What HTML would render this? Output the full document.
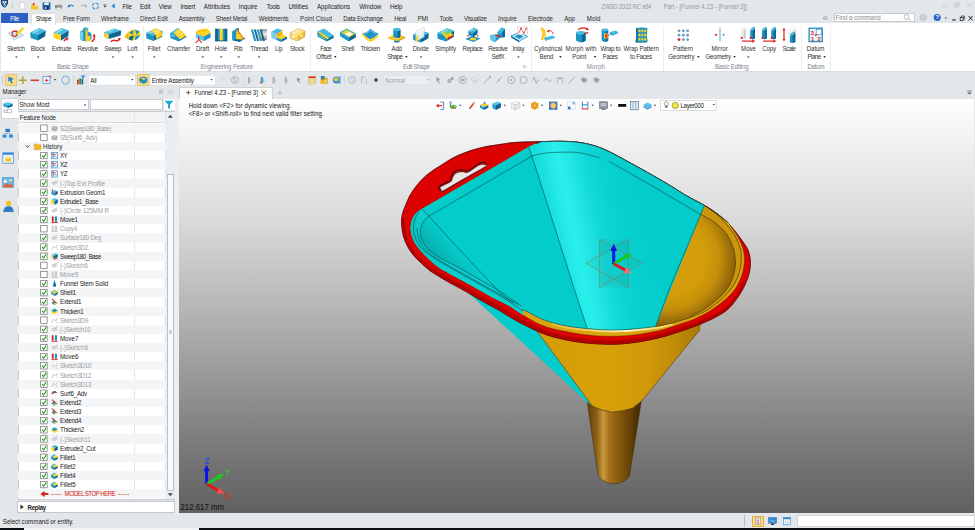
<!DOCTYPE html>
<html><head><meta charset="utf-8"><title>ZW3D 2022 RC x64 - Part - [Funnel 4.Z3 - [Funnel 3]]</title>
<style>
html,body{margin:0;padding:0;}
body{width:975px;height:530px;overflow:hidden;background:#e4e7ea;position:relative;font-family:"Liberation Sans",sans-serif;}
.t{position:absolute;white-space:nowrap;line-height:1;display:block;transform-origin:0 84.65%;}
.b{position:absolute;box-sizing:border-box;}
svg{position:absolute;overflow:visible;}
</style></head>
<body>
<span class="t " style="left:122.40px;top:4.08px;font-size:6.164px;color:#1a1a1a;letter-spacing:-0.158px;transform:scaleY(1.087);">File</span>
<span class="t " style="left:140.10px;top:4.08px;font-size:6.164px;color:#1a1a1a;letter-spacing:-0.080px;transform:scaleY(1.087);">Edit</span>
<span class="t " style="left:158.80px;top:4.08px;font-size:6.164px;color:#1a1a1a;letter-spacing:-0.112px;transform:scaleY(1.087);">View</span>
<span class="t " style="left:180.40px;top:4.08px;font-size:6.164px;color:#1a1a1a;letter-spacing:-0.103px;transform:scaleY(1.087);">Insert</span>
<span class="t " style="left:203.80px;top:4.08px;font-size:6.164px;color:#1a1a1a;letter-spacing:0.026px;transform:scaleY(1.087);">Attributes</span>
<span class="t " style="left:238.80px;top:4.08px;font-size:6.164px;color:#1a1a1a;letter-spacing:-0.035px;transform:scaleY(1.087);">Inquire</span>
<span class="t " style="left:266.50px;top:4.08px;font-size:6.164px;color:#1a1a1a;letter-spacing:-0.238px;transform:scaleY(1.087);">Tools</span>
<span class="t " style="left:288.50px;top:4.08px;font-size:6.164px;color:#1a1a1a;letter-spacing:-0.029px;transform:scaleY(1.087);">Utilities</span>
<span class="t " style="left:317.00px;top:4.08px;font-size:6.164px;color:#1a1a1a;letter-spacing:-0.003px;transform:scaleY(1.087);">Applications</span>
<span class="t " style="left:359.20px;top:4.08px;font-size:6.164px;color:#1a1a1a;letter-spacing:0.046px;transform:scaleY(1.087);">Window</span>
<span class="t " style="left:390.10px;top:4.08px;font-size:6.164px;color:#1a1a1a;letter-spacing:-0.144px;transform:scaleY(1.087);">Help</span>
<span class="t " style="left:601.20px;top:4.08px;font-size:6.164px;color:#9a9a9a;letter-spacing:-0.322px;transform:scaleY(1.087);">ZW3D 2022 RC x64</span>
<span class="t " style="left:663.40px;top:4.08px;font-size:6.164px;color:#9a9a9a;letter-spacing:-0.079px;transform:scaleY(1.087);">Part - [Funnel 4.Z3 - [Funnel 3]]</span>
<div class="b " style="left:1px;top:13.3px;width:27px;height:10.2px;background:#2b5fc4;"></div>
<span class="t " style="left:10.30px;top:15.98px;font-size:6.164px;color:#ffffff;letter-spacing:-0.383px;transform:scaleY(1.087);">File</span>
<span class="t " style="left:63.10px;top:15.98px;font-size:6.164px;color:#2a2a2a;letter-spacing:-0.241px;transform:scaleY(1.087);">Free Form</span>
<span class="t " style="left:101.00px;top:15.98px;font-size:6.164px;color:#2a2a2a;letter-spacing:-0.069px;transform:scaleY(1.087);">Wireframe</span>
<span class="t " style="left:140.10px;top:15.98px;font-size:6.164px;color:#2a2a2a;letter-spacing:-0.085px;transform:scaleY(1.087);">Direct Edit</span>
<span class="t " style="left:178.80px;top:15.98px;font-size:6.164px;color:#2a2a2a;letter-spacing:-0.127px;transform:scaleY(1.087);">Assembly</span>
<span class="t " style="left:215.80px;top:15.98px;font-size:6.164px;color:#2a2a2a;letter-spacing:-0.127px;transform:scaleY(1.087);">Sheet Metal</span>
<span class="t " style="left:258.80px;top:15.98px;font-size:6.164px;color:#2a2a2a;letter-spacing:-0.113px;transform:scaleY(1.087);">Weldments</span>
<span class="t " style="left:300.10px;top:15.98px;font-size:6.164px;color:#2a2a2a;letter-spacing:-0.006px;transform:scaleY(1.087);">Point Cloud</span>
<span class="t " style="left:343.20px;top:15.98px;font-size:6.164px;color:#2a2a2a;letter-spacing:-0.204px;transform:scaleY(1.087);">Data Exchange</span>
<span class="t " style="left:394.20px;top:15.98px;font-size:6.164px;color:#2a2a2a;letter-spacing:-0.194px;transform:scaleY(1.087);">Heal</span>
<span class="t " style="left:417.60px;top:15.98px;font-size:6.164px;color:#2a2a2a;letter-spacing:-0.153px;transform:scaleY(1.087);">PMI</span>
<span class="t " style="left:439.60px;top:15.98px;font-size:6.164px;color:#2a2a2a;letter-spacing:-0.258px;transform:scaleY(1.087);">Tools</span>
<span class="t " style="left:463.90px;top:15.98px;font-size:6.164px;color:#2a2a2a;letter-spacing:-0.184px;transform:scaleY(1.087);">Visualize</span>
<span class="t " style="left:498.10px;top:15.98px;font-size:6.164px;color:#2a2a2a;letter-spacing:-0.021px;transform:scaleY(1.087);">Inquire</span>
<span class="t " style="left:528.10px;top:15.98px;font-size:6.164px;color:#2a2a2a;letter-spacing:-0.160px;transform:scaleY(1.087);">Electrode</span>
<span class="t " style="left:564.20px;top:15.98px;font-size:6.164px;color:#2a2a2a;letter-spacing:-0.056px;transform:scaleY(1.087);">App</span>
<span class="t " style="left:586.80px;top:15.98px;font-size:6.164px;color:#2a2a2a;letter-spacing:0.135px;transform:scaleY(1.087);">Mold</span>
<div class="b " style="left:833.6px;top:12.5px;width:81px;height:9.7px;background:#ffffff;border:0.5px solid #c8ccd0;"></div>
<span class="t " style="left:835.60px;top:14.98px;font-size:6.164px;color:#8a8a8a;letter-spacing:-0.058px;transform:scaleY(1.087);">Find a command</span>
<div class="b " style="left:0.5px;top:23.4px;width:974.5px;height:48.6px;background:#ffffff;border-bottom:1px solid #d9dde1;"></div>
<div class="b " style="left:31px;top:12.9px;width:25.2px;height:12px;background:#ffffff;border:0.5px solid #dde1e5;border-bottom:none;"></div>
<div class="b " style="left:143px;top:26px;width:1px;height:45px;background:#eceef0;"></div>
<div class="b " style="left:310px;top:26px;width:1px;height:45px;background:#eceef0;"></div>
<div class="b " style="left:531px;top:26px;width:1px;height:45px;background:#eceef0;"></div>
<div class="b " style="left:663px;top:26px;width:1px;height:45px;background:#eceef0;"></div>
<div class="b " style="left:801px;top:26px;width:1px;height:45px;background:#eceef0;"></div>
<div class="b " style="left:830px;top:26px;width:1px;height:45px;background:#eceef0;"></div>
<span class="t " style="left:35.70px;top:15.98px;font-size:6.164px;color:#2a2a2a;letter-spacing:-0.425px;transform:scaleY(1.087);">Shape</span>
<span class="t " style="left:6.90px;top:45.98px;font-size:6.164px;color:#333;letter-spacing:-0.141px;transform:scaleY(1.087);">Sketch</span>
<span class="t " style="left:30.80px;top:45.98px;font-size:6.164px;color:#333;letter-spacing:-0.155px;transform:scaleY(1.087);">Block</span>
<span class="t " style="left:51.70px;top:45.98px;font-size:6.164px;color:#333;letter-spacing:-0.221px;transform:scaleY(1.087);">Extrude</span>
<span class="t " style="left:77.50px;top:45.98px;font-size:6.164px;color:#333;letter-spacing:-0.253px;transform:scaleY(1.087);">Revolve</span>
<span class="t " style="left:104.20px;top:45.98px;font-size:6.164px;color:#333;letter-spacing:-0.390px;transform:scaleY(1.087);">Sweep</span>
<span class="t " style="left:127.20px;top:45.98px;font-size:6.164px;color:#333;letter-spacing:0.005px;transform:scaleY(1.087);">Loft</span>
<span class="t " style="left:147.80px;top:45.98px;font-size:6.164px;color:#333;letter-spacing:-0.086px;transform:scaleY(1.087);">Fillet</span>
<span class="t " style="left:167.10px;top:45.98px;font-size:6.164px;color:#333;letter-spacing:-0.077px;transform:scaleY(1.087);">Chamfer</span>
<span class="t " style="left:195.90px;top:45.98px;font-size:6.164px;color:#333;letter-spacing:-0.012px;transform:scaleY(1.087);">Draft</span>
<span class="t " style="left:214.80px;top:45.98px;font-size:6.164px;color:#333;letter-spacing:-0.094px;transform:scaleY(1.087);">Hole</span>
<span class="t " style="left:234.10px;top:45.98px;font-size:6.164px;color:#333;letter-spacing:-0.283px;transform:scaleY(1.087);">Rib</span>
<span class="t " style="left:250.20px;top:45.98px;font-size:6.164px;color:#333;letter-spacing:-0.305px;transform:scaleY(1.087);">Thread</span>
<span class="t " style="left:275.10px;top:45.98px;font-size:6.164px;color:#333;letter-spacing:-0.275px;transform:scaleY(1.087);">Lip</span>
<span class="t " style="left:289.90px;top:45.98px;font-size:6.164px;color:#333;letter-spacing:-0.203px;transform:scaleY(1.087);">Stock</span>
<span class="t " style="left:341.60px;top:45.98px;font-size:6.164px;color:#333;letter-spacing:-0.241px;transform:scaleY(1.087);">Shell</span>
<span class="t " style="left:360.40px;top:45.98px;font-size:6.164px;color:#333;letter-spacing:-0.283px;transform:scaleY(1.087);">Thicken</span>
<span class="t " style="left:412.80px;top:45.98px;font-size:6.164px;color:#333;letter-spacing:-0.172px;transform:scaleY(1.087);">Divide</span>
<span class="t " style="left:435.20px;top:45.98px;font-size:6.164px;color:#333;letter-spacing:-0.097px;transform:scaleY(1.087);">Simplify</span>
<span class="t " style="left:462.60px;top:45.98px;font-size:6.164px;color:#333;letter-spacing:-0.374px;transform:scaleY(1.087);">Replace</span>
<span class="t " style="left:512.60px;top:45.98px;font-size:6.164px;color:#333;letter-spacing:-0.244px;transform:scaleY(1.087);">Inlay</span>
<span class="t " style="left:741.10px;top:45.98px;font-size:6.164px;color:#333;letter-spacing:-0.043px;transform:scaleY(1.087);">Move</span>
<span class="t " style="left:762.30px;top:45.98px;font-size:6.164px;color:#333;letter-spacing:-0.173px;transform:scaleY(1.087);">Copy</span>
<span class="t " style="left:782.40px;top:45.98px;font-size:6.164px;color:#333;letter-spacing:-0.444px;transform:scaleY(1.087);">Scale</span>
<span class="t " style="left:320.30px;top:45.98px;font-size:6.164px;color:#333;letter-spacing:-0.751px;transform:scaleY(1.087);">Face</span>
<span class="t " style="left:316.30px;top:53.68px;font-size:6.164px;color:#333;letter-spacing:-0.205px;transform:scaleY(1.087);">Offset</span>
<span class="t " style="left:391.60px;top:45.98px;font-size:6.164px;color:#333;letter-spacing:-0.289px;transform:scaleY(1.087);">Add</span>
<span class="t " style="left:387.60px;top:53.68px;font-size:6.164px;color:#333;letter-spacing:-0.645px;transform:scaleY(1.087);">Shape</span>
<span class="t " style="left:488.30px;top:45.98px;font-size:6.164px;color:#333;letter-spacing:-0.453px;transform:scaleY(1.087);">Resolve</span>
<span class="t " style="left:491.40px;top:53.68px;font-size:6.164px;color:#333;letter-spacing:-0.367px;transform:scaleY(1.087);">SelfX</span>
<span class="t " style="left:534.00px;top:45.98px;font-size:6.164px;color:#333;letter-spacing:-0.012px;transform:scaleY(1.087);">Cylindrical</span>
<span class="t " style="left:539.60px;top:53.68px;font-size:6.164px;color:#333;letter-spacing:-0.174px;transform:scaleY(1.087);">Bend</span>
<span class="t " style="left:565.60px;top:45.98px;font-size:6.164px;color:#333;letter-spacing:0.075px;transform:scaleY(1.087);">Morph with</span>
<span class="t " style="left:572.20px;top:53.68px;font-size:6.164px;color:#333;letter-spacing:0.010px;transform:scaleY(1.087);">Point</span>
<span class="t " style="left:600.50px;top:45.98px;font-size:6.164px;color:#333;letter-spacing:-0.210px;transform:scaleY(1.087);">Wrap to</span>
<span class="t " style="left:602.80px;top:53.68px;font-size:6.164px;color:#333;letter-spacing:-0.417px;transform:scaleY(1.087);">Faces</span>
<span class="t " style="left:623.60px;top:45.98px;font-size:6.164px;color:#333;letter-spacing:-0.084px;transform:scaleY(1.087);">Wrap Pattern</span>
<span class="t " style="left:630.00px;top:53.68px;font-size:6.164px;color:#333;letter-spacing:-0.217px;transform:scaleY(1.087);">to Faces</span>
<span class="t " style="left:672.90px;top:45.98px;font-size:6.164px;color:#333;letter-spacing:0.032px;transform:scaleY(1.087);">Pattern</span>
<span class="t " style="left:668.20px;top:53.68px;font-size:6.164px;color:#333;letter-spacing:-0.108px;transform:scaleY(1.087);">Geometry</span>
<span class="t " style="left:711.40px;top:45.98px;font-size:6.164px;color:#333;letter-spacing:0.068px;transform:scaleY(1.087);">Mirror</span>
<span class="t " style="left:705.50px;top:53.68px;font-size:6.164px;color:#333;letter-spacing:-0.195px;transform:scaleY(1.087);">Geometry</span>
<span class="t " style="left:806.70px;top:45.98px;font-size:6.164px;color:#333;letter-spacing:-0.091px;transform:scaleY(1.087);">Datum</span>
<span class="t " style="left:807.40px;top:53.68px;font-size:6.164px;color:#333;letter-spacing:-0.473px;transform:scaleY(1.087);">Plane</span>
<span class="t " style="left:56.90px;top:63.78px;font-size:6.164px;color:#7e868e;letter-spacing:-0.265px;transform:scaleY(1.087);">Basic Shape</span>
<span class="t " style="left:200.40px;top:63.78px;font-size:6.164px;color:#7e868e;letter-spacing:-0.171px;transform:scaleY(1.087);">Engineering Feature</span>
<span class="t " style="left:402.90px;top:63.78px;font-size:6.164px;color:#7e868e;letter-spacing:-0.346px;transform:scaleY(1.087);">Edit Shape</span>
<span class="t " style="left:586.80px;top:63.78px;font-size:6.164px;color:#7e868e;letter-spacing:0.185px;transform:scaleY(1.087);">Morph</span>
<span class="t " style="left:714.90px;top:63.78px;font-size:6.164px;color:#7e868e;letter-spacing:-0.149px;transform:scaleY(1.087);">Basic Editing</span>
<span class="t " style="left:807.40px;top:63.78px;font-size:6.164px;color:#7e868e;letter-spacing:-0.231px;transform:scaleY(1.087);">Datum</span>
<svg width="975" height="100" viewBox="0 0 975 100" style="left:0;top:0">
<polygon points="15.1,56.4 17.7,56.4 16.4,58.1" fill="#333"/>
<polygon points="36.9,56.4 39.5,56.4 38.2,58.1" fill="#333"/>
<polygon points="111.6,56.4 114.2,56.4 112.9,58.1" fill="#333"/>
<polygon points="131.3,56.4 133.9,56.4 132.6,58.1" fill="#333"/>
<polygon points="152.9,56.4 155.5,56.4 154.2,58.1" fill="#333"/>
<polygon points="201.5,56.4 204.1,56.4 202.8,58.1" fill="#333"/>
<polygon points="219.9,56.4 222.5,56.4 221.2,58.1" fill="#333"/>
<polygon points="237.5,56.4 240.1,56.4 238.8,58.1" fill="#333"/>
<polygon points="257.8,56.4 260.4,56.4 259.1,58.1" fill="#333"/>
<polygon points="419.7,56.4 422.3,56.4 421.0,58.1" fill="#333"/>
<polygon points="517.2,56.4 519.8,56.4 518.5,58.1" fill="#333"/>
<polygon points="747.0,56.4 749.6,56.4 748.3,58.1" fill="#333"/>
<polygon points="333.9,56.1 336.5,56.1 335.2,57.9" fill="#333"/>
<polygon points="405.1,56.1 407.7,56.1 406.4,57.9" fill="#333"/>
<polygon points="559.1,56.1 561.7,56.1 560.4,57.9" fill="#333"/>
<polygon points="593.7,56.1 596.3,56.1 595.0,57.9" fill="#333"/>
<polygon points="697.1,56.1 699.7,56.1 698.4,57.9" fill="#333"/>
<polygon points="733.2,56.1 735.8,56.1 734.5,57.9" fill="#333"/>
<polygon points="823.3,56.1 825.9,56.1 824.6,57.9" fill="#333"/>
<path d="M523.6,64.8 L523.6,67.4 L526.2,67.4 M524.8,65.2 L526.2,66.6" stroke="#8a8a8a" stroke-width="0.5" fill="none"/>
<polygon points="8.2,33.0 17.2,30.0 23.7,35.5 14.2,40.0" fill="#cfe6f6" stroke="#8fb4d6" stroke-width="0.5"/><circle cx="14.7" cy="33.8" r="2.7" fill="none" stroke="#e0201c" stroke-width="1.1"/><path d="M16.5,34.8 L22.7,28.6" stroke="#ffd21e" stroke-width="2.4" stroke-linecap="round"/><path d="M15.799999999999999,35.6 L17.2,34.2" stroke="#555" stroke-width="1.2"/>
<polygon points="30.2,32.5 38.9,28.0 45.7,30.5 38.0,34.9" fill="#42bce0"/><polygon points="30.2,32.5 38.0,34.9 38.0,40.5 30.7,38.0" fill="#1c94c6"/><polygon points="38.0,34.9 45.7,30.5 45.2,36.2 38.0,40.5" fill="#0d6796"/><polygon points="32.5,32.2 38.1,28.9 40.4,29.5 34.9,32.9" fill="#ffffff" fill-opacity="0.45"/>
<polygon points="53.3,32.5 62.0,28.0 68.8,30.5 61.0,34.9" fill="#42bce0"/><polygon points="53.3,32.5 61.0,34.9 61.0,40.5 53.8,38.0" fill="#ffd21e"/><polygon points="61.0,34.9 68.8,30.5 68.3,36.2 61.0,40.5" fill="#0d6796"/><polygon points="55.6,32.2 61.2,28.9 63.5,29.5 57.9,32.9" fill="#ffffff" fill-opacity="0.45"/><path d="M63.8,40.8 L66.3,39.2" stroke="#e0201c" stroke-width="1.4" fill="none"/><polygon points="68.8,37.6 67.2,40.7 65.3,37.7" fill="#e0201c"/>
<path d="M80.1,33 Q80.1,30.5 83.1,30.2 L83.1,28.5 Q85.6,26.4 88.19999999999999,28.5 L88.19999999999999,32 Q91.19999999999999,32 91.39999999999999,34.5 L91.39999999999999,39.5 Q85.6,43 80.1,39.5Z" fill="#1c94c6"/><path d="M83.1,30.2 Q85.6,28.2 88.19999999999999,30.2 L88.19999999999999,28.5 Q85.6,26.4 83.1,28.5Z" fill="#42bce0"/><path d="M80.1,33 Q81.6,31.2 83.1,31.4 L83.1,40.8 Q81.19999999999999,40.4 80.1,39.5Z" fill="#7ad0ee"/><polygon points="85.6,30.0 87.6,30.0 87.6,36.0 90.2,36.0 90.2,41.0 85.6,41.0" fill="#ffd21e" stroke="#f0b010" stroke-width="0.4"/><path d="M91.6,41.6 Q95.0,39.6 94.19999999999999,35.6" stroke="#e0201c" stroke-width="1.4" fill="none"/><polygon points="94.0,33.6 95.8,36.6 92.6,36.4" fill="#e0201c"/>
<polygon points="104.2,32.3 113.7,28.5 121.2,30.6 108.6,34.3" fill="#42bce0"/><polygon points="104.2,32.3 108.6,34.3 108.6,39.0 104.7,36.9" fill="#1c94c6"/><polygon points="108.6,34.3 121.2,30.6 120.7,35.4 108.6,39.0" fill="#0d6796"/><polygon points="106.8,32.1 112.9,29.2 115.4,29.8 109.3,32.6" fill="#ffffff" fill-opacity="0.45"/><polygon points="104.5,32.6 108.6,34.3 108.6,39.0 104.8,37.2" fill="#ffd21e"/><path d="M110.7,41.6 Q113.2,39.6 115.7,40.6 T119.2,39.3" stroke="#e0201c" stroke-width="1.5" fill="none"/><polygon points="121.2,38.4 118.8,41.0 118.0,37.8" fill="#e0201c"/>
<path d="M124.6,36.5 Q127.6,30 134.6,29.2 Q140.1,30 140.6,34.5 Q138.6,39.5 131.6,40.8 Q127.1,40 124.6,36.5Z" fill="#ffd21e"/><polygon points="129.1,32.5 133.6,30.0 132.6,35.0" fill="#1c94c6"/><polygon points="135.1,29.8 139.6,31.2 136.6,35.0" fill="#1c94c6"/><polygon points="129.6,36.5 134.1,35.6 132.2,40.5 128.6,39.6" fill="#0d6796"/><polygon points="135.6,36.0 140.2,35.2 137.6,39.0 134.6,40.0" fill="#1c94c6"/><polygon points="124.6,36.5 128.2,33.6 128.2,39.2" fill="#f0b010"/>
<polygon points="146.0,33.0 155.2,28.5 162.5,31.0 153.4,35.4" fill="#42bce0"/><polygon points="146.0,33.0 153.4,35.4 153.4,41.0 146.5,38.5" fill="#1c94c6"/><polygon points="153.4,35.4 162.5,31.0 162.0,36.8 153.4,41.0" fill="#0d6796"/><polygon points="148.5,32.8 154.4,29.4 156.9,30.0 150.9,33.4" fill="#ffffff" fill-opacity="0.45"/><path d="M150.5,31.2 L156,28.2 Q162.6,30 162.2,35.6 L156.4,39 Q156.4,33.4 150.5,31.2Z" fill="#ffd21e"/><path d="M152.5,31.6 L157,29.2 Q160,30 161,32 L156.6,34.6 Q155,32.4 152.5,31.6Z" fill="#fff" fill-opacity="0.35"/>
<polygon points="170.0,33.2 177.9,27.7 179.2,28.6 173.7,32.8" fill="#42bce0"/><polygon points="170.0,33.2 173.7,32.8 180.2,39.2 178.8,41.5 170.5,37.9" fill="#1c94c6"/><polygon points="170.8,34.0 173.4,33.8 176.2,36.6 171.2,37.0" fill="#7ad0ee" fill-opacity="0.6"/><polygon points="180.2,39.2 186.2,35.5 186.2,37.0 178.8,41.5" fill="#0d6796"/><polygon points="173.7,32.8 179.2,28.6 186.2,35.5 180.2,39.2" fill="#ffd21e"/><polygon points="176.2,32.4 179.2,30.0 183.2,34.0 180.2,36.0" fill="#fff" fill-opacity="0.25"/>
<path d="M195.8,33.5 L195.8,38 L203.8,41 L210.4,37.4 L210.4,33Z" fill="#5cc6ea"/><path d="M203.8,36.5 L210.4,33 L210.4,37.4 L203.8,41Z" fill="#1c94c6"/><path d="M195.8,33.5 Q195.8,30.4 199.4,29.6 L205.8,28.4 Q209.8,29 210.4,33 L203.8,36.5Z" fill="#ffd21e"/><path d="M196.8,32 L206.8,30.2" stroke="#f0b010" stroke-width="0.9"/><path d="M198.8,36.5 L198.8,39.5 M198.8,39.5 L195.8,42.8 M198.8,39.5 L201.8,42.8" stroke="#e0201c" stroke-width="1.1" fill="none"/>
<rect x="215.2" y="28.8" width="12" height="12.4" fill="#1c94c6"/><rect x="215.2" y="28.8" width="2.6" height="12.4" fill="#0d6796"/><rect x="224.6" y="28.8" width="2.6" height="12.4" fill="#0d6796"/><rect x="219.6" y="28.8" width="3.2" height="12.4" fill="#ffd21e"/><rect x="215.2" y="40" width="12" height="1.2" fill="#0a5680" fill-opacity="0.6"/>
<polygon points="232.1,31.5 237.6,27.8 237.6,37.4 232.1,40.2" fill="#1c94c6"/><polygon points="232.1,40.2 237.6,37.4 246.0,38.0 239.6,42.0" fill="#0d6796"/><polygon points="237.6,27.8 239.0,28.6 239.0,37.6 237.6,37.4" fill="#0a5680"/><polygon points="236.2,30.4 243.2,39.6 236.2,39.2" fill="#ffd21e"/><polygon points="236.2,30.4 238.0,29.6 244.2,38.6 243.2,39.6" fill="#e8901a"/>
<defs><linearGradient id="gThr" x1="0" x2="0" y1="0" y2="1"><stop offset="0" stop-color="#8a8a8a"/><stop offset="0.45" stop-color="#f2f2f2"/><stop offset="1" stop-color="#7a7a7a"/></linearGradient></defs><rect x="259.8" y="29.2" width="7" height="11" fill="url(#gThr)"/><polygon points="251.0,29.4 253.0,29.4 256.2,41.0 254.2,41.0" fill="#1c94c6"/><polygon points="253.9,29.4 255.9,29.4 259.1,41.0 257.1,41.0" fill="#0d6796"/><polygon points="256.8,29.4 258.8,29.4 262.0,41.0 260.0,41.0" fill="#1c94c6"/><polygon points="259.7,29.4 261.7,29.4 264.9,41.0 262.9,41.0" fill="#0d6796"/><circle cx="260.6" cy="35.6" r="1" fill="#f0b010"/>
<polygon points="271.0,32.0 277.5,28.6 282.5,30.2 276.4,34.0" fill="#42bce0"/><polygon points="271.0,32.0 276.4,34.0 276.4,40.0 271.4,38.0" fill="#7ad0ee"/><polygon points="276.4,34.0 282.5,30.2 282.5,34.6 276.6,37.8" fill="#f0b010"/><polygon points="276.6,37.8 282.5,34.6 287.0,36.4 281.4,39.6" fill="#ffd21e"/><polygon points="276.4,37.6 281.4,39.6 281.4,42.0 276.4,40.0" fill="#1c94c6"/><polygon points="281.4,39.6 287.0,36.4 287.0,38.8 281.4,42.0" fill="#0d6796"/>
<polygon points="289.8,33.0 298.5,28.5 305.3,31.0 297.6,35.4" fill="#fbe28a"/><polygon points="289.8,33.0 297.6,35.4 297.6,41.0 290.3,38.5" fill="#f7d060"/><polygon points="297.6,35.4 305.3,31.0 304.8,36.8 297.6,41.0" fill="#eeb830"/><polygon points="292.1,32.8 297.7,29.4 300.0,30.0 294.4,33.4" fill="#ffffff" fill-opacity="0.45"/><polygon points="289.8,33.0 298.5,28.5 305.3,31.0 304.8,36.8 297.5,41.0 290.3,38.5" fill="none" stroke="#c89a6a" stroke-width="0.5"/><circle cx="293.8" cy="36.6" r="1.6" fill="#fff6c0"/><circle cx="301.3" cy="35.6" r="1.4" fill="#fff0a0"/>
<polygon points="317.2,31.6 324.2,28.4 333.8,35.4 326.6,38.6" fill="#42bce0"/><polygon points="317.2,31.6 326.6,38.6 326.6,41.6 317.6,36.4" fill="#1c94c6"/><polygon points="326.6,38.6 333.8,35.4 333.6,38.0 326.6,41.6" fill="#0d6796"/><polygon points="318.2,32.6 319.8,31.8 329.2,38.2 327.2,39.2" fill="#ffd21e"/><polygon points="319.2,34.6 324.6,38.4 324.6,39.4 319.2,36.0" fill="#8fcf6a"/>
<polygon points="339.8,32.0 346.8,28.6 355.8,33.6 348.8,37.6" fill="#ffd21e"/><polygon points="344.8,34.0 349.4,32.0 352.4,34.0 348.2,36.4" fill="#fff"/><polygon points="339.8,32.0 346.8,28.6 347.4,29.8 341.8,32.6 348.8,36.4 348.8,37.6" fill="#42bce0"/><polygon points="346.8,28.6 355.8,33.6 354.4,34.0 347.2,30.0" fill="#42bce0"/><polygon points="339.8,32.0 348.8,37.6 348.8,41.4 340.2,36.2" fill="#1c94c6"/><polygon points="348.8,37.6 355.8,33.6 355.8,37.4 348.8,41.4" fill="#0d6796"/>
<path d="M362.2,33 Q367.2,33.5 370.2,28.6 Q374.2,32.4 378.59999999999997,33.6 Q375.2,38 369.8,39.6 Q365.2,36.6 362.2,33Z" fill="#1c94c6"/><path d="M364.2,33.4 Q368.2,33.4 370.4,30 Q373.2,32.6 376.2,33.6" fill="none" stroke="#8fdcf4" stroke-width="0.8"/><path d="M362.2,33 Q365.2,36.6 369.8,39.6 Q375.2,38 378.59999999999997,33.6 L378.4,36 Q375.2,40.4 369.8,42 Q365.2,39.4 362.4,35.4Z" fill="#ffd21e"/>
<polygon points="388.2,37.0 395.2,34.0 405.2,36.4 398.2,39.8" fill="#ffd21e"/><polygon points="388.2,37.0 398.2,39.8 398.2,41.4 388.2,38.6" fill="#f0b010"/><polygon points="398.2,39.8 405.2,36.4 405.2,38.0 398.2,41.4" fill="#e09a10"/><path d="M393.2,29.4 L393.2,37 Q396.8,39 400.4,37 L400.4,29.4Z" fill="#1c94c6"/><path d="M397.59999999999997,30 L400.4,29.4 L400.4,37 Q399.2,37.8 397.59999999999997,38Z" fill="#0d6796"/><ellipse cx="396.8" cy="29.4" rx="3.6" ry="1.6" fill="#42bce0"/><path d="M393.8,40.4 L393.8,42 Q396.8,43.6 399.8,42 L399.8,41Z" fill="#1c94c6"/>
<polygon points="412.8,34.8 421.8,30.5 428.8,32.9 420.8,37.1" fill="#42bce0"/><polygon points="412.8,34.8 420.8,37.1 420.8,42.5 413.3,40.1" fill="#1c94c6"/><polygon points="420.8,37.1 428.8,32.9 428.3,38.4 420.8,42.5" fill="#0d6796"/><polygon points="415.2,34.6 421.0,31.3 423.4,31.9 417.6,35.2" fill="#ffffff" fill-opacity="0.45"/><polygon points="415.8,31.6 424.2,27.6 424.2,37.0 415.8,41.6" fill="#ffffff" fill-opacity="0.8" stroke="#9ab" stroke-width="0.4"/><polygon points="415.8,35.6 417.8,36.2 417.8,41.0 415.8,41.6" fill="#ffd21e"/>
<polygon points="437.2,32.9 446.7,28.0 454.2,30.7 445.7,35.4" fill="#42bce0"/><polygon points="437.2,32.9 445.7,35.4 445.7,41.5 437.7,38.8" fill="#1c94c6"/><polygon points="445.7,35.4 454.2,30.7 453.7,36.9 445.7,41.5" fill="#0d6796"/><polygon points="439.8,32.6 445.9,28.9 448.4,29.6 442.3,33.3" fill="#ffffff" fill-opacity="0.45"/><polygon points="442.2,33.4 448.2,30.4 453.2,35.0 447.2,39.4" fill="#ffd21e"/><polygon points="444.2,32.6 448.2,30.8 450.8,33.0 446.8,35.0" fill="#7ccf5a"/><polygon points="447.6,37.6 452.8,35.2 452.8,37.0 447.6,39.6" fill="#e0201c"/>
<polygon points="465.2,39.0 472.2,36.0 480.6,38.4 473.2,42.0" fill="#1c94c6"/><ellipse cx="473.0" cy="39" rx="3.2" ry="1.3" fill="#ffd21e"/><polygon points="467.8,34.6 466.8,36.6 468.8,36.2" fill="#e0201c"/><polygon points="477.8,34.6 478.8,36.6 476.8,36.2" fill="#e0201c"/><polygon points="468.2,31.1 473.6,27.6 477.8,29.5 473.0,32.9" fill="#42bce0"/><polygon points="468.2,31.1 473.0,32.9 473.0,37.2 468.5,35.3" fill="#1c94c6"/><polygon points="473.0,32.9 477.8,29.5 477.5,33.9 473.0,37.2" fill="#0d6796"/><polygon points="469.6,30.9 473.1,28.3 474.5,28.8 471.1,31.3" fill="#ffffff" fill-opacity="0.45"/>
<polygon points="497.0,32.6 501.6,27.6 505.0,29.0 505.0,37.0 500.0,38.0" fill="#1c94c6"/><polygon points="501.6,27.6 505.0,29.0 501.0,33.4 497.0,32.6" fill="#42bce0"/><polygon points="502.6,32.0 505.0,29.0 505.0,37.0 502.6,37.6" fill="#0d6796"/><polygon points="490.0,35.0 497.6,34.0 494.4,42.4 490.4,40.0" fill="#5cc6ea"/><polygon points="497.6,34.0 500.0,38.0 494.4,42.4" fill="#1c94c6"/><polygon points="495.4,34.4 500.6,35.8 500.0,37.2 495.0,35.8" fill="#e0201c"/>
<polygon points="511.0,36.0 519.0,32.4 527.6,36.6 519.4,41.0" fill="#cfe8f8" stroke="#1c94c6" stroke-width="0.8"/><polygon points="514.6,36.2 519.0,34.2 523.6,36.6 519.4,39.0" fill="#1c94c6"/><polygon points="511.0,36.0 519.4,41.0 519.4,42.6 511.0,37.4" fill="#0d6796"/><rect x="517.6" y="27" width="9.6" height="7.4" fill="#fff" stroke="#aaa" stroke-width="0.4"/><path d="M518.6,33 L521,28.4 L523.8,33 L526.2,28.6" fill="none" stroke="#e0201c" stroke-width="0.7"/><circle cx="521" cy="28.4" r="0.8" fill="#e0201c"/><circle cx="523.8" cy="33" r="0.8" fill="#e0201c"/><circle cx="526.2" cy="28.6" r="0.8" fill="#e0201c"/>
<polygon points="544.4,37.6 553.4,35.4 555.4,38.0 546.4,40.6" fill="#42bce0"/><polygon points="544.4,37.6 546.4,40.6 546.4,41.6 544.4,38.8" fill="#0d6796"/><path d="M542.0,27.6 Q548.4,32 544.0,38.6 Q542.4,40.6 541.0,39.6 Q544.4,33 540.8,29Z" fill="#ffd21e" stroke="#f0b010" stroke-width="0.5"/><path d="M548.0,31 Q552.0,29.6 553.4,34" fill="none" stroke="#e0201c" stroke-width="0.9"/><polygon points="546.8,31.4 549.2,29.6 549.2,32.4" fill="#e0201c"/>
<path d="M576,32.8 L576,40.6 Q580.8,44.199999999999996 585.6,40.6 L585.6,32.8Z" fill="#1c94c6"/><path d="M581.952,32.8 L585.6,32.8 L585.6,40.6 Q584.16,42.4 581.952,42.4Z" fill="#0d6796"/><ellipse cx="580.8" cy="32.8" rx="4.8" ry="1.8" fill="#42bce0"/><path d="M578,29.6 Q583,26.4 587.4,29" fill="none" stroke="#e0201c" stroke-width="1.2"/><polygon points="588.8,30.2 585.6,30.0 587.6,27.4" fill="#e0201c"/><path d="M584,33.4 L587,33" stroke="#e0201c" stroke-width="1"/><polygon points="588.6,32.8 586.6,31.6 586.6,34.2" fill="#e0201c"/>
<path d="M601.6,30.0 L601.6,40.6 Q604.9,43.4 608.2,40.6 L608.2,30.0Z" fill="#1c94c6"/><path d="M605.692,30.0 L608.2,30.0 L608.2,40.6 Q607.21,42.0 605.692,42.0Z" fill="#0d6796"/><ellipse cx="604.9" cy="30.0" rx="3.3" ry="1.4" fill="#42bce0"/><rect x="604.0" y="33.4" width="4.2" height="5" fill="#ffd21e"/><polygon points="605.0,34.4 608.2,34.0 607.0,36.0 608.2,37.6 605.0,37.4" fill="#e0201c"/><polygon points="610.0,32.0 615.6,30.4 618.0,32.0 612.2,34.2" fill="#42bce0"/><polygon points="610.0,32.0 612.2,34.2 612.2,35.6 610.0,33.4" fill="#0d6796"/><polygon points="612.2,34.2 618.0,32.0 618.0,33.2 612.2,35.6" fill="#1c94c6"/><path d="M608.4,35.6 L610.6,34.4" stroke="#1c94c6" stroke-width="0.8"/>
<path d="M636,28.2 Q641,27.0 647.4,28.0 Q646.4,35.2 647.6,42.2 Q641,43.2 635.6,42.2 Q637,35.2 636,28.2Z" fill="#1c94c6"/><path d="M636,28.2 Q637,35.2 635.6,42.2 L637.2,42.4 Q638.4,35.2 637.4,28.0Z" fill="#0d6796"/><rect x="638.4" y="29.6" width="2" height="2.6" fill="#ffd21e"/><rect x="638.4" y="33.8" width="2" height="2.6" fill="#ffd21e"/><rect x="638.4" y="38.0" width="2" height="2.6" fill="#ffd21e"/><rect x="641.3" y="29.6" width="2" height="2.6" fill="#ffd21e"/><rect x="641.3" y="33.8" width="2" height="2.6" fill="#ffd21e"/><rect x="641.3" y="38.0" width="2" height="2.6" fill="#ffd21e"/><rect x="644.2" y="29.6" width="2" height="2.6" fill="#ffd21e"/><rect x="644.2" y="33.8" width="2" height="2.6" fill="#ffd21e"/><rect x="644.2" y="38.0" width="2" height="2.6" fill="#ffd21e"/>
<circle cx="679.0" cy="30.8" r="1.4" fill="#6a9cc0"/><circle cx="679.0" cy="35.2" r="1.4" fill="#6a9cc0"/><circle cx="679.0" cy="39.6" r="1.4" fill="#e0201c"/><circle cx="683.3" cy="30.8" r="1.4" fill="#6a9cc0"/><circle cx="683.3" cy="35.2" r="1.4" fill="#6a9cc0"/><circle cx="683.3" cy="39.6" r="1.4" fill="#6a9cc0"/><circle cx="687.6" cy="30.8" r="1.4" fill="#6a9cc0"/><circle cx="687.6" cy="35.2" r="1.4" fill="#6a9cc0"/><circle cx="687.6" cy="39.6" r="1.4" fill="#6a9cc0"/>
<path d="M720,28.4 L720,41.4" stroke="#3a9ccc" stroke-width="0.9"/><circle cx="716.2" cy="34.8" r="1.1" fill="#e0201c"/><circle cx="723.6" cy="34.8" r="1.1" fill="#6a9cc0"/>
<path d="M741.1,38.8 L741.1,31.0 Q741.3,28.7 743.8,27.3 Q746.0,26.2 746.0,28.4 L746.0,38.2 Q743.6,39.7 741.1,38.8Z" fill="#e9eaeb"/><path d="M743.6,30.3 L746.0,28.4 L746.0,38.2 Q745.0,39.0 743.6,39.2Z" fill="#cfd2d4"/><path d="M741.6,31.0 Q742.1,29.0 744.0,27.8 Q745.6,27.1 745.8,28.6 L743.6,30.5Z" fill="#f6f6f6"/><path d="M750.2,38.8 L750.2,31.0 Q750.4,28.7 752.8,27.3 Q755.0,26.2 755.0,28.4 L755.0,38.2 Q752.6,39.7 750.2,38.8Z" fill="#1c94c6"/><path d="M752.7,30.3 L755.0,28.4 L755.0,38.2 Q754.0,39.0 752.7,39.2Z" fill="#0d6796"/><path d="M750.7,31.0 Q751.2,29.0 753.1,27.8 Q754.6,27.1 754.8,28.6 L752.6,30.5Z" fill="#5cc6ea"/><circle cx="741.7" cy="37.9" r="1.05" fill="#e0201c"/><circle cx="750.6" cy="37.9" r="1.05" fill="#e0201c"/><path d="M742.0,41.1 L752.2,41.1" stroke="#e0201c" stroke-width="1.2" fill="none"/><polygon points="755.2,41.1 752.2,42.9 752.2,39.3" fill="#e0201c"/>
<path d="M762.0,38.8 L762.0,31.0 Q762.2,28.7 764.6,27.3 Q766.8,26.2 766.8,28.4 L766.8,38.2 Q764.4,39.7 762.0,38.8Z" fill="#1c94c6"/><path d="M764.5,30.3 L766.8,28.4 L766.8,38.2 Q765.8,39.0 764.5,39.2Z" fill="#0d6796"/><path d="M762.5,31.0 Q763.0,29.0 764.9,27.8 Q766.4,27.1 766.6,28.6 L764.4,30.5Z" fill="#5cc6ea"/><path d="M771.2,38.8 L771.2,31.0 Q771.4,28.7 773.8,27.3 Q776.0,26.2 776.0,28.4 L776.0,38.2 Q773.6,39.7 771.2,38.8Z" fill="#1c94c6"/><path d="M773.7,30.3 L776.0,28.4 L776.0,38.2 Q775.0,39.0 773.7,39.2Z" fill="#0d6796"/><path d="M771.7,31.0 Q772.2,29.0 774.1,27.8 Q775.6,27.1 775.8,28.6 L773.6,30.5Z" fill="#5cc6ea"/><circle cx="762.5" cy="37.9" r="1.05" fill="#e0201c"/><circle cx="771.6999999999999" cy="37.9" r="1.05" fill="#e0201c"/><path d="M763.0,41.1 L773.2,41.1" stroke="#e0201c" stroke-width="1.2" fill="none"/><polygon points="776.2,41.1 773.2,42.9 773.2,39.3" fill="#e0201c"/>
<path d="M784.0,29.4 L784.0,39.8" stroke="#e0201c" stroke-width="1.2"/><polygon points="784.0,27.6 785.4,30.2 782.6,30.2" fill="#e0201c"/><polygon points="784.0,41.6 785.4,39.0 782.6,39.0" fill="#e0201c"/><path d="M788.6,42.6 L788.6,32.4 Q789.0,29.3 792.7,27.6 Q796.0,26.1 796.0,29.0 L796.0,41.8 Q792.3,43.7 788.6,42.6Z" fill="#eceeef"/><path d="M792.4,31.4 L796.0,29.0 L796.0,41.8 Q794.5,42.9 792.4,43.1Z" fill="#d2d6d8"/><path d="M789.3,32.4 Q790.1,29.8 793.0,28.2 Q795.4,27.2 795.6,29.2 L792.3,31.7Z" fill="#f8f8f8"/><path d="M790.0,42.4 L790.0,35.5 Q790.3,33.4 792.9,32.2 Q795.2,31.3 795.2,33.2 L795.2,41.9 Q792.6,43.2 790.0,42.4Z" fill="#1c94c6"/><path d="M792.7,34.8 L795.2,33.2 L795.2,41.9 Q794.2,42.6 792.7,42.7Z" fill="#0d6796"/><path d="M790.5,35.5 Q791.0,33.8 793.1,32.7 Q794.8,32.0 794.9,33.3 L792.6,35.1Z" fill="#5cc6ea"/>
<rect x="809.1" y="28.200000000000003" width="13.2" height="13.4" fill="#e4f1fa" stroke="#2a8cc4" stroke-width="1.3"/><rect x="816.2" y="29.3" width="5.2" height="5.2" fill="#fff" stroke="#2a8cc4" stroke-width="0.6"/><text x="810.8000000000001" y="34.800000000000004" font-size="5.8" font-weight="bold" fill="#e0201c" font-family="Liberation Sans, sans-serif">3</text><text x="811.0" y="40.6" font-size="5.8" font-weight="bold" fill="#e0201c" font-family="Liberation Sans, sans-serif">1</text><text x="817.4" y="40.6" font-size="5.8" font-weight="bold" fill="#e0201c" font-family="Liberation Sans, sans-serif">2</text><circle cx="815.9" cy="35.1" r="1" fill="#e0201c"/>
<path d="M0.9,0 L8,0 L8,3 Q7.4,6 4.5,7.8 Q1.4,6 0.9,3Z" fill="#1b3f74"/><path d="M2.4,4.6 Q4.5,7.6 4.5,7.6 Q6.4,6 6.8,4.4Z" fill="#1aa0c8"/><path d="M2.2,1.2 L4,0.8 L4.4,2.8 L2.8,3.6Z M5,0.8 L6.8,1.2 L6.2,3.6 L4.8,2.8Z" fill="#e8eef6"/><circle cx="4.5" cy="4" r="0.9" fill="#e8eef6"/>
<rect x="12.1" y="2.4" width="0.5" height="6.6" fill="#b8bcc0"/>
<path d="M19.9,2.4 L23,2.4 L24.6,4 L24.6,9.2 L19.9,9.2Z" fill="#ffffff" stroke="#b0b4b8" stroke-width="0.4"/>
<path d="M31,5 L34,5 L34.8,5.8 L38.2,5.8 L38.2,9.4 L31,9.4Z" fill="#f6c432"/><path d="M32.2,5.2 Q32.4,2.6 35,2.4 Q34,3.6 34.6,5" fill="#e03020"/>
<rect x="42.6" y="2.4" width="7.8" height="7.2" fill="#245ea8"/><rect x="44.2" y="2.4" width="4.6" height="2.6" fill="#e8eef6"/><rect x="44.4" y="6.6" width="4.2" height="3" fill="#12346a"/><rect x="45" y="7" width="1.2" height="2" fill="#dfe6f0"/>
<rect x="55" y="5" width="7.2" height="3.6" rx="0.6" fill="#8a8e92"/><rect x="56.4" y="3.2" width="4.4" height="2" fill="#d8dcdf"/><rect x="56.4" y="7.4" width="4.4" height="2" fill="#f4f4f4" stroke="#8a8e92" stroke-width="0.3"/><rect x="59.8" y="5.8" width="1.2" height="0.8" fill="#e8c020"/>
<path d="M68.6,6.6 Q70.6,3.6 73.8,6.4" fill="none" stroke="#2a7cc8" stroke-width="1.2"/><polygon points="67.6,7.6 68.2,4.6 70.6,6.8" fill="#2a7cc8"/>
<path d="M80.8,6.4 Q84,3.6 86,6.6" fill="none" stroke="#b4b8bc" stroke-width="1.2"/><polygon points="87,7.6 86.4,4.6 84,6.8" fill="#b4b8bc"/>
<circle cx="95.4" cy="6" r="3" fill="none" stroke="#2a8cd8" stroke-width="1.1" stroke-dasharray="3.4 1.3"/>
<rect x="103.4" y="4.6" width="3.2" height="0.6" fill="#333"/><polygon points="103.4,5.8 106.6,5.8 105,7.6" fill="#333"/>
<polygon points="111.4,6 114.8,3.2 114.8,8.8" fill="#2a8cd8"/>
<rect x="943.2" y="5.2" width="3.6" height="2" rx="0.8" fill="none" stroke="#b8bcc0" stroke-width="0.5"/>
<rect x="954.2" y="4.2" width="3.8" height="3" fill="none" stroke="#b8bcc0" stroke-width="0.5"/><rect x="955.8" y="2.8" width="3.8" height="3" fill="none" stroke="#b8bcc0" stroke-width="0.5"/>
<path d="M966.6,3 L971.2,7.4 M971.2,3 L966.6,7.4" stroke="#c0c4c8" stroke-width="0.6"/>
<path d="M823.6,17.8 L825.3,16 L827,17.8 L827,19 L823.6,19Z" fill="none" stroke="#666" stroke-width="0.5"/>
<circle cx="906.6" cy="16.9" r="2.5" fill="none" stroke="#8a8e92" stroke-width="0.6"/><path d="M908.4,18.8 L910.4,20.6" stroke="#8a8e92" stroke-width="0.7"/>
<circle cx="923.2" cy="17.4" r="3.1" fill="none" stroke="#9a9ea2" stroke-width="0.6"/><circle cx="923.2" cy="17.4" r="1.3" fill="none" stroke="#9a9ea2" stroke-width="0.6"/>
<circle cx="937.2" cy="17.4" r="3.5" fill="#2a62c4"/><text x="935.8" y="19.4" font-size="5.4" font-weight="bold" fill="#fff" font-family="Liberation Sans, sans-serif">?</text>
<polygon points="944.7,17.5 946.9,17.5 945.8,18.9" fill="#333"/>
<rect x="952.2" y="19.4" width="3.6" height="1.1" fill="#222"/>
<rect x="960.2" y="17.4" width="3" height="3" fill="none" stroke="#222" stroke-width="0.8"/><path d="M961.4,17.2 L961.4,16 L964.4,16 L964.4,19 L963.4,19" fill="none" stroke="#222" stroke-width="0.7"/>
<path d="M968.6,16 L972.6,20.4 M972.6,16 L968.6,20.4" stroke="#222" stroke-width="1"/>
</svg>
<svg width="975" height="120" viewBox="0 0 975 120" style="left:0;top:0">
<rect x="2.2" y="76.4" width="0.7" height="0.7" fill="#8a8e92"/>
<rect x="2.2" y="78.2" width="0.7" height="0.7" fill="#8a8e92"/>
<rect x="2.2" y="80" width="0.7" height="0.7" fill="#8a8e92"/>
<rect x="2.2" y="81.8" width="0.7" height="0.7" fill="#8a8e92"/>
<rect x="2.2" y="83.6" width="0.7" height="0.7" fill="#8a8e92"/>
<rect x="5.8" y="74.6" width="11" height="10.8" fill="#fbdc86" stroke="#e0b040" stroke-width="0.6"/>
<path d="M8.4,76.4 L14.2,79 L11.8,79.8 L12.6,83.2 L11,83.6 L10.2,80.4 L8.4,82Z" fill="#2a7cd8"/>
<path d="M19,80.3 L26.6,80.3 M22.8,76.6 L22.8,84" stroke="#a4a428" stroke-width="1.5"/>
<rect x="30.8" y="79.5" width="8.2" height="1.6" fill="#d43a3a"/>
<rect x="43" y="76.6" width="7" height="7" fill="#eef4fa" stroke="#4a8ccc" stroke-width="0.7"/><path d="M44.8,80.4 L48.4,80.4 M46.6,78.6 L46.6,82.2" stroke="#e03030" stroke-width="0.9"/><path d="M48.6,76 L50.8,76 L50.8,78.2" stroke="#e03030" stroke-width="0.6" fill="none"/>
<polygon points="53.8,79.0 56.2,79.0 55.0,80.5" fill="#333"/>
<polygon points="61.6,80.1 63.6,76.2 67.6,76.2 69.6,80.1 67.6,84 63.6,84" fill="none" stroke="#4a9ce0" stroke-width="0.8"/>
<rect x="73.2" y="75" width="0.5" height="10" fill="#c4c8cc"/>
<rect x="77" y="79.6" width="1.8" height="4.8" fill="#d03030"/><rect x="79.2" y="78.2" width="1.8" height="6.2" fill="#30a030"/><rect x="81.4" y="79" width="1.8" height="5.4" fill="#2a5cc0"/><polygon points="80.6,75.4 85.4,75.4 83.6,77.4 83.6,79 82.4,79 82.4,77.4" fill="#2a8cd8"/>
<rect x="88.2" y="75.2" width="47.2" height="9.8" fill="#fff" stroke="#d0d4d8" stroke-width="0.5"/>
<polygon points="131.1,79.0 133.5,79.0 132.3,80.5" fill="#333"/>
<rect x="137.4" y="74.4" width="11.8" height="11" fill="#fbdc86" stroke="#e0b040" stroke-width="0.6"/>
<polygon points="139.4,78 143.6,76.2 147.4,78 147.4,82 143.6,84 139.4,82" fill="#2a8cd8"/><polygon points="141,78.6 143.6,77.6 146,78.8 143.6,80" fill="#f8d030"/><path d="M139.4,79.4 Q141.6,82.8 145,81" stroke="#35a535" stroke-width="0.9" fill="none"/>
<rect x="149.6" y="75.2" width="66" height="9.8" fill="#fff" stroke="#d0d4d8" stroke-width="0.5"/>
<polygon points="210.3,79.0 212.7,79.0 211.5,80.5" fill="#333"/>
<circle cx="222.8" cy="78.6" r="1.4" fill="none" stroke="#c8ccd0" stroke-width="0.5"/>
<circle cx="234.9" cy="80" r="3.4" fill="none" stroke="#9ea2a6" stroke-width="0.7"/><path d="M232.6,77.8 L237,82.4 M234.9,76.6 L234.9,83.4" stroke="#9ea2a6" stroke-width="0.5"/>
<rect x="243" y="75" width="0.5" height="10" fill="#c4c8cc"/>
<rect x="248.0" y="77" width="1.8" height="6.4" fill="#a8acb0"/><rect x="250.4" y="79" width="1" height="3" fill="#a8acb0" fill-opacity="0.6"/>
<rect x="260.90000000000003" y="77" width="1.8" height="6.4" fill="#2a8cc8"/><rect x="263.3" y="79" width="1" height="3" fill="#2a8cc8" fill-opacity="0.6"/>
<rect x="272.6" y="77" width="1.8" height="6.4" fill="#a8acb0"/><rect x="275" y="79" width="1" height="3" fill="#a8acb0" fill-opacity="0.6"/>
<rect x="284.8" y="77" width="1.8" height="6.4" fill="#a8acb0"/><rect x="287.2" y="79" width="1" height="3" fill="#a8acb0" fill-opacity="0.6"/>
<rect x="259.8" y="81.6" width="1.6" height="1.8" fill="#e07030"/>
<path d="M297,77.4 L300.6,79.6 L299,80 L300,82.6 L299,83 L298,80.6 L297,81.6Z" fill="#9a8e86"/>
<rect x="308.6" y="76.4" width="7" height="7.6" fill="#f4e6a0" stroke="#c8a040" stroke-width="0.4"/><rect x="308.6" y="76.4" width="7" height="1.8" fill="#d83a30"/><path d="M308.6,80 L315.6,80 M308.6,82 L315.6,82" stroke="#b8a060" stroke-width="0.4"/>
<path d="M320.4,76.6 L323.4,76.6 L324.2,77.6 L327.8,77.6 L327.8,83.8 L320.4,83.8Z" fill="#f2b820"/><rect x="321" y="76" width="3.6" height="3.4" fill="#2a7cc8"/><rect x="324" y="80" width="3" height="3" fill="#f8e080" stroke="#c89020" stroke-width="0.4"/>
<circle cx="336.4" cy="80" r="3.6" fill="#2a8cd8"/><path d="M333.6,78.4 Q336,76.8 338.2,78.2 Q338.8,80.4 336.6,81.6 Q334.4,81.6 333.6,78.4Z" fill="#f4c830"/><rect x="338.6" y="76.4" width="2.2" height="7.4" fill="#6aa8d8"/>
<rect x="344.3" y="75" width="0.5" height="10" fill="#c4c8cc"/>
<circle cx="351.9" cy="80" r="3.5" fill="none" stroke="#9ea2a6" stroke-width="0.7"/><path d="M351.9,77.8 L351.9,80.2 L353.4,81" stroke="#9ea2a6" stroke-width="0.6" fill="none"/>
<path d="M361.6,83 L361.6,77 L365,77 M366.2,79 L366.2,84" stroke="#9ea2a6" stroke-width="0.7" fill="none"/>
<rect x="372.8" y="76.8" width="6.4" height="6.4" fill="#f4f5f6" stroke="#d0d4d8" stroke-width="0.4"/><rect x="374.3" y="78.3" width="3.4" height="3.4" fill="#444"/>
<rect x="383.7" y="75.2" width="46.6" height="9.2" fill="#eceef0" stroke="#d8dcdf" stroke-width="0.5"/>
<polygon points="426.4,79.0 428.8,79.0 427.6,80.5" fill="#b0b4b8"/>
<path d="M436.4,76.8 L440.6,79.6 L438.8,80 L439.8,83 L438.8,83.4 L437.8,80.6 L436.4,81.8Z" fill="#9ea2a6"/>
<circle cx="449.4" cy="81" r="2" fill="#9ea2a6"/><circle cx="452.2" cy="78.4" r="1.5" fill="#9ea2a6"/><circle cx="449.4" cy="81" r="0.8" fill="#e4e7ea"/>
<circle cx="462.7" cy="80" r="3.5" fill="none" stroke="#9ea2a6" stroke-width="0.8"/><polygon points="461.4,78 465,80 461.4,82" fill="#9ea2a6"/>
<circle cx="471.8" cy="78.6" r="0.55" fill="#9ea2a6"/>
<circle cx="474.2" cy="77.8" r="0.55" fill="#9ea2a6"/>
<circle cx="477.4" cy="79.0" r="0.55" fill="#9ea2a6"/>
<circle cx="473.2" cy="81.0" r="0.55" fill="#9ea2a6"/>
<circle cx="475.8" cy="80.6" r="0.55" fill="#9ea2a6"/>
<circle cx="477.8" cy="82.0" r="0.55" fill="#9ea2a6"/>
<circle cx="474.6" cy="82.6" r="0.55" fill="#9ea2a6"/>
<path d="M483.6,83.6 L490.2,76.8" stroke="#9ea2a6" stroke-width="0.8"/><circle cx="490.2" cy="76.8" r="0.9" fill="#9ea2a6"/>
<path d="M495.6,83.6 L502.4,76.6" stroke="#9ea2a6" stroke-width="0.8"/><circle cx="499" cy="80.1" r="0.9" fill="#9ea2a6"/>
<circle cx="511.3" cy="80" r="3.5" fill="none" stroke="#9ea2a6" stroke-width="0.8"/><circle cx="511.3" cy="80" r="0.9" fill="#9ea2a6"/>
<circle cx="523.6" cy="80" r="3.5" fill="none" stroke="#9ea2a6" stroke-width="0.8"/>
<path d="M532.4,80.4 L534,77 L536.4,83.4 L538,79.6 L539.4,80.4" stroke="#9ea2a6" stroke-width="0.8" fill="none"/>
<path d="M544.2,80.6 Q546,76.6 547.8,80 T551.4,79.6" stroke="#9ea2a6" stroke-width="0.8" fill="none"/>
<path d="M556.2,78 L563.8,78 M557.4,83.4 Q557.4,78.6 560,78.2 Q562.6,78.6 562.6,83.4" stroke="#9ea2a6" stroke-width="0.8" fill="none"/>
<path d="M568.4,83.6 L575.2,76.6" stroke="#9ea2a6" stroke-width="0.8"/>
<path d="M580.8000000000001,78.4 L583.8000000000001,77.2 L587.6,79.6 L585.6,82.6 L582.6,82.4Z" fill="#9ea2a6"/>
<path d="M593.1,78.4 L596.1,77.2 L599.9,79.6 L597.9,82.6 L594.9,82.4Z" fill="#9ea2a6"/>
<path d="M967.2,90.4 L971.8,90.4 M967.2,91.6 L971.8,91.6" stroke="#777" stroke-width="0.5"/><polygon points="967.4,92.4 971.6,92.4 969.5,94.6" fill="#555"/>
</svg>
<span class="t " style="left:90.30px;top:77.88px;font-size:6.164px;color:#222;letter-spacing:-0.250px;transform:scaleY(1.087);">All</span>
<span class="t " style="left:151.80px;top:77.88px;font-size:6.164px;color:#222;letter-spacing:-0.146px;transform:scaleY(1.087);">Entire Assembly</span>
<span class="t " style="left:385.10px;top:77.88px;font-size:6.164px;color:#9a9ea2;letter-spacing:0.006px;transform:scaleY(1.087);">Normal</span>
<span class="t " style="left:2.60px;top:89.18px;font-size:6.164px;color:#222;letter-spacing:-0.090px;transform:scaleY(1.087);">Manager</span>
<div class="b " style="left:1.4px;top:97.7px;width:16.2px;height:21.8px;background:#ffffff;border:0.5px solid #d0d4d8;border-right:none;"></div>
<div class="b " style="left:17.6px;top:99.2px;width:71px;height:11.2px;background:#ffffff;border:0.5px solid #c8ccd0;"></div>
<div class="b " style="left:90.4px;top:99.2px;width:72.2px;height:11.2px;background:#ffffff;border:0.5px solid #c8ccd0;"></div>
<div class="b " style="left:163.5px;top:99.4px;width:11.2px;height:10.8px;background:#ffffff;"></div>
<span class="t " style="left:19.30px;top:102.08px;font-size:6.164px;color:#222;letter-spacing:-0.032px;transform:scaleY(1.087);">Show Most</span>
<div class="b " style="left:17.6px;top:111px;width:157.4px;height:388.6px;background:#ffffff;border:0.5px solid #c8ccd0;"></div>
<div class="b " style="left:18px;top:111.5px;width:147.6px;height:11.4px;background:#f3f4f5;border-bottom:0.5px solid #d8dcdf;"></div>
<div class="b " style="left:134.3px;top:111.5px;width:0.5px;height:387.7px;background:#e2e4e6;"></div>
<div class="b " style="left:165.4px;top:111.5px;width:0.5px;height:387.7px;background:#e2e4e6;"></div>
<span class="t " style="left:19.80px;top:115.38px;font-size:6.164px;color:#222;letter-spacing:-0.141px;transform:scaleY(1.087);">Feature Node</span>
<div class="b " style="left:165.9px;top:111.5px;width:8.9px;height:387.7px;background:#e9eef3;"></div>
<div class="b " style="left:166.8px;top:174.2px;width:7.4px;height:316.4px;background:#f7f9fb;border:0.6px solid #bcc2ca;"></div>
<div class="b " style="left:18px;top:123.73px;width:147.6px;height:9.14px;background:#f4f5f6;"></div>
<div class="b " style="left:18px;top:142.01px;width:147.6px;height:9.14px;background:#f4f5f6;"></div>
<div class="b " style="left:18px;top:160.29px;width:147.6px;height:9.14px;background:#f4f5f6;"></div>
<div class="b " style="left:18px;top:178.57px;width:147.6px;height:9.14px;background:#f4f5f6;"></div>
<div class="b " style="left:18px;top:196.85px;width:147.6px;height:9.14px;background:#f4f5f6;"></div>
<div class="b " style="left:18px;top:215.13px;width:147.6px;height:9.14px;background:#f4f5f6;"></div>
<div class="b " style="left:18px;top:233.41px;width:147.6px;height:9.14px;background:#f4f5f6;"></div>
<div class="b " style="left:18px;top:251.69px;width:147.6px;height:9.14px;background:#f4f5f6;"></div>
<div class="b " style="left:18px;top:269.97px;width:147.6px;height:9.14px;background:#f4f5f6;"></div>
<div class="b " style="left:18px;top:288.25px;width:147.6px;height:9.14px;background:#f4f5f6;"></div>
<div class="b " style="left:18px;top:306.53px;width:147.6px;height:9.14px;background:#f4f5f6;"></div>
<div class="b " style="left:18px;top:324.81px;width:147.6px;height:9.14px;background:#f4f5f6;"></div>
<div class="b " style="left:18px;top:343.09px;width:147.6px;height:9.14px;background:#f4f5f6;"></div>
<div class="b " style="left:18px;top:361.37px;width:147.6px;height:9.14px;background:#f4f5f6;"></div>
<div class="b " style="left:18px;top:379.65px;width:147.6px;height:9.14px;background:#f4f5f6;"></div>
<div class="b " style="left:18px;top:397.93px;width:147.6px;height:9.14px;background:#f4f5f6;"></div>
<div class="b " style="left:18px;top:416.21px;width:147.6px;height:9.14px;background:#f4f5f6;"></div>
<div class="b " style="left:18px;top:434.49px;width:147.6px;height:9.14px;background:#f4f5f6;"></div>
<div class="b " style="left:18px;top:452.77px;width:147.6px;height:9.14px;background:#f4f5f6;"></div>
<div class="b " style="left:18px;top:471.05px;width:147.6px;height:9.14px;background:#f4f5f6;"></div>
<div class="b " style="left:18px;top:489.33px;width:147.6px;height:9.14px;background:#f4f5f6;"></div>
<span class="t " style="left:60.00px;top:125.78px;font-size:6.164px;color:#9a9ea2;letter-spacing:-0.427px;transform:scaleY(1.087);">S2(Sweep180_Base)</span>
<span class="t " style="left:60.00px;top:134.92px;font-size:6.164px;color:#9a9ea2;letter-spacing:-0.256px;transform:scaleY(1.087);">S5(Surf6_Adv)</span>
<span class="t " style="left:43.00px;top:144.06px;font-size:6.164px;color:#1a1a1a;letter-spacing:0.017px;transform:scaleY(1.087);">History</span>
<span class="t " style="left:60.00px;top:153.20px;font-size:6.164px;color:#1a1a1a;letter-spacing:-0.562px;transform:scaleY(1.087);">XY</span>
<span class="t " style="left:60.00px;top:162.34px;font-size:6.164px;color:#1a1a1a;letter-spacing:-0.388px;transform:scaleY(1.087);">XZ</span>
<span class="t " style="left:60.00px;top:171.48px;font-size:6.164px;color:#1a1a1a;letter-spacing:-0.388px;transform:scaleY(1.087);">YZ</span>
<span class="t " style="left:60.00px;top:180.62px;font-size:6.164px;color:#9a9ea2;letter-spacing:-0.061px;transform:scaleY(1.087);">(-)Top Ext Profile</span>
<span class="t " style="left:60.00px;top:189.76px;font-size:6.164px;color:#1a1a1a;letter-spacing:-0.155px;transform:scaleY(1.087);">Extrusion Geom1</span>
<span class="t " style="left:60.00px;top:198.90px;font-size:6.164px;color:#1a1a1a;letter-spacing:-0.304px;transform:scaleY(1.087);">Extrude1_Base</span>
<span class="t " style="left:60.00px;top:208.04px;font-size:6.164px;color:#9a9ea2;letter-spacing:-0.079px;transform:scaleY(1.087);">(-)Circle 125MM R</span>
<span class="t " style="left:60.00px;top:217.18px;font-size:6.164px;color:#1a1a1a;letter-spacing:-0.120px;transform:scaleY(1.087);">Move1</span>
<span class="t " style="left:60.00px;top:226.32px;font-size:6.164px;color:#9a9ea2;letter-spacing:-0.164px;transform:scaleY(1.087);">Copy4</span>
<span class="t " style="left:60.00px;top:235.46px;font-size:6.164px;color:#9a9ea2;letter-spacing:-0.253px;transform:scaleY(1.087);">Surface180 Deg</span>
<span class="t " style="left:60.00px;top:244.60px;font-size:6.164px;color:#9a9ea2;letter-spacing:-0.206px;transform:scaleY(1.087);">Sketch3D2</span>
<span class="t " style="left:60.00px;top:253.74px;font-size:6.164px;color:#1a1a1a;letter-spacing:-0.432px;transform:scaleY(1.087);">Sweep180_Base</span>
<span class="t " style="left:60.00px;top:262.88px;font-size:6.164px;color:#9a9ea2;letter-spacing:-0.063px;transform:scaleY(1.087);">(-)Sketch6</span>
<span class="t " style="left:60.00px;top:272.02px;font-size:6.164px;color:#9a9ea2;letter-spacing:-0.020px;transform:scaleY(1.087);">Move5</span>
<span class="t " style="left:60.00px;top:281.16px;font-size:6.164px;color:#1a1a1a;letter-spacing:-0.127px;transform:scaleY(1.087);">Funnel Stem Solid</span>
<span class="t " style="left:60.00px;top:290.30px;font-size:6.164px;color:#1a1a1a;letter-spacing:-0.256px;transform:scaleY(1.087);">Shell1</span>
<span class="t " style="left:60.00px;top:299.44px;font-size:6.164px;color:#1a1a1a;letter-spacing:-0.188px;transform:scaleY(1.087);">Extend1</span>
<span class="t " style="left:60.00px;top:308.58px;font-size:6.164px;color:#1a1a1a;letter-spacing:-0.189px;transform:scaleY(1.087);">Thicken1</span>
<span class="t " style="left:60.00px;top:317.72px;font-size:6.164px;color:#9a9ea2;letter-spacing:-0.206px;transform:scaleY(1.087);">Sketch3D9</span>
<span class="t " style="left:60.00px;top:326.86px;font-size:6.164px;color:#9a9ea2;letter-spacing:-0.115px;transform:scaleY(1.087);">(-)Sketch10</span>
<span class="t " style="left:60.00px;top:336.00px;font-size:6.164px;color:#1a1a1a;letter-spacing:-0.020px;transform:scaleY(1.087);">Move7</span>
<span class="t " style="left:60.00px;top:345.14px;font-size:6.164px;color:#9a9ea2;letter-spacing:-0.063px;transform:scaleY(1.087);">(-)Sketch8</span>
<span class="t " style="left:60.00px;top:354.28px;font-size:6.164px;color:#1a1a1a;letter-spacing:-0.020px;transform:scaleY(1.087);">Move6</span>
<span class="t " style="left:60.00px;top:363.42px;font-size:6.164px;color:#9a9ea2;letter-spacing:-0.238px;transform:scaleY(1.087);">Sketch3D10</span>
<span class="t " style="left:60.00px;top:372.56px;font-size:6.164px;color:#9a9ea2;letter-spacing:-0.238px;transform:scaleY(1.087);">Sketch3D12</span>
<span class="t " style="left:60.00px;top:381.70px;font-size:6.164px;color:#9a9ea2;letter-spacing:-0.238px;transform:scaleY(1.087);">Sketch3D13</span>
<span class="t " style="left:60.00px;top:390.84px;font-size:6.164px;color:#1a1a1a;letter-spacing:-0.198px;transform:scaleY(1.087);">Surf6_Adv</span>
<span class="t " style="left:60.00px;top:399.98px;font-size:6.164px;color:#1a1a1a;letter-spacing:-0.188px;transform:scaleY(1.087);">Extend2</span>
<span class="t " style="left:60.00px;top:409.12px;font-size:6.164px;color:#1a1a1a;letter-spacing:-0.188px;transform:scaleY(1.087);">Extend3</span>
<span class="t " style="left:60.00px;top:418.26px;font-size:6.164px;color:#1a1a1a;letter-spacing:-0.188px;transform:scaleY(1.087);">Extend4</span>
<span class="t " style="left:60.00px;top:427.40px;font-size:6.164px;color:#1a1a1a;letter-spacing:-0.126px;transform:scaleY(1.087);">Thicken2</span>
<span class="t " style="left:60.00px;top:436.54px;font-size:6.164px;color:#9a9ea2;letter-spacing:-0.073px;transform:scaleY(1.087);">(-)Sketch11</span>
<span class="t " style="left:60.00px;top:445.68px;font-size:6.164px;color:#1a1a1a;letter-spacing:-0.191px;transform:scaleY(1.087);">Extrude2_Cut</span>
<span class="t " style="left:60.00px;top:454.82px;font-size:6.164px;color:#1a1a1a;letter-spacing:-0.120px;transform:scaleY(1.087);">Fillet1</span>
<span class="t " style="left:60.00px;top:463.96px;font-size:6.164px;color:#1a1a1a;letter-spacing:-0.120px;transform:scaleY(1.087);">Fillet2</span>
<span class="t " style="left:60.00px;top:473.10px;font-size:6.164px;color:#1a1a1a;letter-spacing:-0.120px;transform:scaleY(1.087);">Fillet4</span>
<span class="t " style="left:60.00px;top:482.24px;font-size:6.164px;color:#1a1a1a;letter-spacing:-0.120px;transform:scaleY(1.087);">Fillet5</span>
<span class="t " style="left:50.40px;top:491.38px;font-size:6.164px;color:#d42020;letter-spacing:0.227px;transform:scaleY(1.087);">-----</span>
<span class="t " style="left:64.60px;top:491.38px;font-size:6.164px;color:#d42020;letter-spacing:-0.534px;transform:scaleY(1.087);">MODEL STOP HERE</span>
<span class="t " style="left:118.20px;top:491.38px;font-size:6.164px;color:#d42020;letter-spacing:0.187px;transform:scaleY(1.087);">-----</span>
<svg width="180" height="530" viewBox="0 0 180 530" style="left:0;top:0">
<rect x="40.7" y="125.00" width="6.4" height="6.4" fill="#fff" stroke="#555" stroke-width="0.6"/>
<path d="M51.6,127.10000000000002 Q54,125.10000000000002 57.4,126.70000000000002 L57.4,130.3 Q54,132.10000000000002 51.6,130.10000000000002Z" fill="#a8acb0"/><path d="M53,127.30000000000001 L56,127.10000000000002 M53,129.10000000000002 L56,128.9" stroke="#e4e4e4" stroke-width="0.5"/>
<rect x="40.7" y="134.14" width="6.4" height="6.4" fill="#fff" stroke="#555" stroke-width="0.6"/>
<path d="M51.6,136.24 Q54,134.24 57.4,135.84 L57.4,139.44 Q54,141.24 51.6,139.24Z" fill="#a8acb0"/><path d="M53,136.44 L56,136.24 M53,138.24 L56,138.04" stroke="#e4e4e4" stroke-width="0.5"/>
<path d="M25.8,145.38 L27.6,147.38 L29.4,145.38" fill="none" stroke="#333" stroke-width="0.9"/>
<path d="M34.2,143.98 L36.6,143.98 L37.4,144.78 L41,144.78 L41,149.58 L34.2,149.58Z" fill="#f2b824" stroke="#c8901a" stroke-width="0.4"/>
<rect x="40.7" y="152.42" width="6.4" height="6.4" fill="#fff" stroke="#555" stroke-width="0.6"/>
<path d="M42,155.52 L43.6,157.32 L46.2,153.52" fill="none" stroke="#18a018" stroke-width="1.1"/>
<rect x="51.3" y="152.42000000000004" width="6.4" height="6.4" fill="#e4f0fa" stroke="#3a8cc8" stroke-width="0.6"/><path d="M53,152.42000000000004 L53,158.82000000000002 M51.3,156.72000000000003 L57.7,156.72000000000003" stroke="#3a8cc8" stroke-width="0.4"/><path d="M53,156.72000000000003 L56.4,153.52000000000004" stroke="#e0201c" stroke-width="0.7"/><rect x="52.4" y="153.32000000000002" width="1.6" height="1.6" fill="#e0201c"/>
<rect x="40.7" y="161.56" width="6.4" height="6.4" fill="#fff" stroke="#555" stroke-width="0.6"/>
<path d="M42,164.66 L43.6,166.46 L46.2,162.66" fill="none" stroke="#18a018" stroke-width="1.1"/>
<rect x="51.3" y="161.56000000000003" width="6.4" height="6.4" fill="#e4f0fa" stroke="#3a8cc8" stroke-width="0.6"/><path d="M53,161.56000000000003 L53,167.96 M51.3,165.86 L57.7,165.86" stroke="#3a8cc8" stroke-width="0.4"/><path d="M53,165.86 L56.4,162.66000000000003" stroke="#e0201c" stroke-width="0.7"/><rect x="52.4" y="162.46" width="1.6" height="1.6" fill="#e0201c"/>
<rect x="40.7" y="170.70" width="6.4" height="6.4" fill="#fff" stroke="#555" stroke-width="0.6"/>
<path d="M42,173.80 L43.6,175.60 L46.2,171.80" fill="none" stroke="#18a018" stroke-width="1.1"/>
<rect x="51.3" y="170.70000000000002" width="6.4" height="6.4" fill="#e4f0fa" stroke="#3a8cc8" stroke-width="0.6"/><path d="M53,170.70000000000002 L53,177.1 M51.3,175.0 L57.7,175.0" stroke="#3a8cc8" stroke-width="0.4"/><path d="M53,175.0 L56.4,171.8" stroke="#e0201c" stroke-width="0.7"/><rect x="52.4" y="171.6" width="1.6" height="1.6" fill="#e0201c"/>
<rect x="40.7" y="179.84" width="6.4" height="6.4" fill="#fff" stroke="#555" stroke-width="0.6"/>
<path d="M42,182.94 L43.6,184.74 L46.2,180.94" fill="none" stroke="#18a018" stroke-width="1.1"/>
<polygon points="51.4,183.1 55.0,181.1 57.8,182.9 54.0,185.1" fill="#e0e3e6" stroke="#b4b8bc" stroke-width="0.4"/><path d="M54.4,183.14000000000001 L57.6,179.94000000000003" stroke="#b4b8bc" stroke-width="0.9"/><circle cx="53.6" cy="183.14000000000001" r="1" fill="none" stroke="#b4b8bc" stroke-width="0.4"/>
<rect x="40.7" y="188.98" width="6.4" height="6.4" fill="#fff" stroke="#555" stroke-width="0.6"/>
<path d="M42,192.08 L43.6,193.88 L46.2,190.08" fill="none" stroke="#18a018" stroke-width="1.1"/>
<polygon points="51.4,191.3 54.6,189.9 57.8,191.3 54.6,192.9" fill="#42bce0"/><polygon points="51.4,191.3 54.6,192.9 54.6,195.7 51.4,194.1" fill="#1c94c6"/><polygon points="54.6,192.9 57.8,191.3 57.8,194.1 54.6,195.7" fill="#0d6796"/><path d="M52.4,188.88000000000002 L52.4,191.28000000000003" stroke="#e0201c" stroke-width="0.9"/><polygon points="55.4,192.1 57.8,191.5 56.4,193.7" fill="#e0201c"/>
<rect x="40.7" y="198.12" width="6.4" height="6.4" fill="#fff" stroke="#555" stroke-width="0.6"/>
<path d="M42,201.22 L43.6,203.02 L46.2,199.22" fill="none" stroke="#18a018" stroke-width="1.1"/>
<polygon points="51.3,199.8 54.8,198.2 57.8,199.4 54.4,201.2" fill="#42bce0"/><polygon points="51.3,199.8 54.4,201.2 54.4,204.8 51.4,203.4" fill="#ffd21e"/><polygon points="54.4,201.2 57.8,199.4 57.8,203.0 54.4,204.8" fill="#0d6796"/>
<rect x="40.7" y="207.26" width="6.4" height="6.4" fill="#fff" stroke="#555" stroke-width="0.6"/>
<path d="M42,210.36 L43.6,212.16 L46.2,208.36" fill="none" stroke="#18a018" stroke-width="1.1"/>
<polygon points="51.4,210.6 55.0,208.6 57.8,210.4 54.0,212.6" fill="#e0e3e6" stroke="#b4b8bc" stroke-width="0.4"/><path d="M54.4,210.56 L57.6,207.36" stroke="#b4b8bc" stroke-width="0.9"/><circle cx="53.6" cy="210.56" r="1" fill="none" stroke="#b4b8bc" stroke-width="0.4"/>
<rect x="40.7" y="216.40" width="6.4" height="6.4" fill="#fff" stroke="#555" stroke-width="0.6"/>
<path d="M42,219.50 L43.6,221.30 L46.2,217.50" fill="none" stroke="#18a018" stroke-width="1.1"/>
<rect x="54.8" y="216.3" width="2.2" height="5.6" rx="1" fill="#1c94c6"/><rect x="51.8" y="216.3" width="1.8" height="5.6" rx="0.9" fill="#e0201c"/><path d="M51.4,222.50000000000003 L57.8,222.50000000000003" stroke="#e0201c" stroke-width="0.9"/>
<rect x="40.7" y="225.54" width="6.4" height="6.4" fill="#fff" stroke="#555" stroke-width="0.6"/>
<rect x="54.8" y="225.44000000000003" width="2.2" height="5.6" rx="1" fill="#c4c8cc"/><rect x="51.8" y="225.44000000000003" width="1.8" height="5.6" rx="0.9" fill="#c4c8cc"/><path d="M51.4,231.64000000000004 L57.8,231.64000000000004" stroke="#b4b8bc" stroke-width="0.9"/>
<rect x="40.7" y="234.68" width="6.4" height="6.4" fill="#fff" stroke="#555" stroke-width="0.6"/>
<path d="M42,237.78 L43.6,239.58 L46.2,235.78" fill="none" stroke="#18a018" stroke-width="1.1"/>
<polygon points="51.4,238.0 55.0,236.0 57.8,237.8 54.0,240.0" fill="#e0e3e6" stroke="#b4b8bc" stroke-width="0.4"/><path d="M54.4,237.98000000000002 L57.6,234.78000000000003" stroke="#b4b8bc" stroke-width="0.9"/><circle cx="53.6" cy="237.98000000000002" r="1" fill="none" stroke="#b4b8bc" stroke-width="0.4"/>
<rect x="40.7" y="243.82" width="6.4" height="6.4" fill="#fff" stroke="#555" stroke-width="0.6"/>
<path d="M42,246.92 L43.6,248.72 L46.2,244.92" fill="none" stroke="#18a018" stroke-width="1.1"/>
<path d="M52,249.92000000000002 L53.4,246.12 L56,247.92000000000002 L57.6,244.52" stroke="#b4b8bc" stroke-width="0.7" fill="none"/><circle cx="57" cy="249.32000000000002" r="0.6" fill="#b4b8bc"/>
<rect x="40.7" y="252.96" width="6.4" height="6.4" fill="#fff" stroke="#555" stroke-width="0.6"/>
<path d="M42,256.06 L43.6,257.86 L46.2,254.06" fill="none" stroke="#18a018" stroke-width="1.1"/>
<polygon points="51.3,254.9 55.6,253.3 57.8,254.3 53.4,256.1" fill="#42bce0"/><polygon points="51.3,254.9 53.4,256.1 53.4,259.1 51.3,257.9" fill="#ffd21e"/><polygon points="53.4,256.1 57.8,254.3 57.8,257.3 53.4,259.1" fill="#0d6796"/><path d="M54,259.46 L57.6,258.46" stroke="#e0201c" stroke-width="0.8"/>
<rect x="40.7" y="262.10" width="6.4" height="6.4" fill="#fff" stroke="#555" stroke-width="0.6"/>
<polygon points="51.4,265.4 55.0,263.4 57.8,265.2 54.0,267.4" fill="#e0e3e6" stroke="#b4b8bc" stroke-width="0.4"/><path d="M54.4,265.40000000000003 L57.6,262.2" stroke="#b4b8bc" stroke-width="0.9"/><circle cx="53.6" cy="265.40000000000003" r="1" fill="none" stroke="#b4b8bc" stroke-width="0.4"/>
<rect x="40.7" y="271.24" width="6.4" height="6.4" fill="#fff" stroke="#555" stroke-width="0.6"/>
<rect x="54.8" y="271.14" width="2.2" height="5.6" rx="1" fill="#c4c8cc"/><rect x="51.8" y="271.14" width="1.8" height="5.6" rx="0.9" fill="#c4c8cc"/><path d="M51.4,277.34 L57.8,277.34" stroke="#b4b8bc" stroke-width="0.9"/>
<rect x="40.7" y="280.38" width="6.4" height="6.4" fill="#fff" stroke="#555" stroke-width="0.6"/>
<path d="M42,283.48 L43.6,285.28 L46.2,281.48" fill="none" stroke="#18a018" stroke-width="1.1"/>
<polygon points="54.4,280.1 56.2,286.1 54.4,287.1 52.6,286.1" fill="#1c94c6"/><polygon points="54.4,280.1 56.2,286.1 54.4,287.1" fill="#0d6796"/>
<rect x="40.7" y="289.52" width="6.4" height="6.4" fill="#fff" stroke="#555" stroke-width="0.6"/>
<path d="M42,292.62 L43.6,294.42 L46.2,290.62" fill="none" stroke="#18a018" stroke-width="1.1"/>
<polygon points="51.2,291.8 54.4,290.0 57.8,292.0 54.6,294.0" fill="#ffd21e"/><polygon points="51.2,291.8 54.6,294.0 54.6,296.0 51.2,293.8" fill="#1c94c6"/><polygon points="54.6,294.0 57.8,292.0 57.8,294.0 54.6,296.0" fill="#0d6796"/><polygon points="51.2,291.8 54.4,290.0 57.8,292.0 57.0,292.1 54.4,290.7 52.0,291.9" fill="#42bce0"/>
<rect x="40.7" y="298.66" width="6.4" height="6.4" fill="#fff" stroke="#555" stroke-width="0.6"/>
<path d="M42,301.76 L43.6,303.56 L46.2,299.76" fill="none" stroke="#18a018" stroke-width="1.1"/>
<polygon points="51.2,302.4 54.6,301.2 57.9,303.0 54.2,305.2" fill="#1c94c6"/><polygon points="54.2,303.0 57.9,303.0 54.2,305.2" fill="#ffd21e"/><path d="M52,298.96000000000004 L54.6,301.76" stroke="#e0201c" stroke-width="1.1"/><polygon points="55.6,302.8 53.2,302.2 54.8,300.6" fill="#e0201c"/>
<rect x="40.7" y="307.80" width="6.4" height="6.4" fill="#fff" stroke="#555" stroke-width="0.6"/>
<path d="M42,310.90 L43.6,312.70 L46.2,308.90" fill="none" stroke="#18a018" stroke-width="1.1"/>
<polygon points="51.2,310.5 54.6,308.5 57.9,310.5 54.4,312.5" fill="#1c94c6"/><polygon points="51.2,310.5 54.4,312.5 57.9,310.5 57.9,312.1 54.4,314.3 51.2,312.1" fill="#ffd21e"/><path d="M52.6,310.5 L54.6,309.3 L56.6,310.5" stroke="#42bce0" stroke-width="0.5" fill="none"/>
<rect x="40.7" y="316.94" width="6.4" height="6.4" fill="#fff" stroke="#555" stroke-width="0.6"/>
<path d="M52,323.03999999999996 L53.4,319.24 L56,321.03999999999996 L57.6,317.64" stroke="#b4b8bc" stroke-width="0.7" fill="none"/><circle cx="57" cy="322.44" r="0.6" fill="#b4b8bc"/>
<rect x="40.7" y="326.08" width="6.4" height="6.4" fill="#fff" stroke="#555" stroke-width="0.6"/>
<path d="M42,329.18 L43.6,330.98 L46.2,327.18" fill="none" stroke="#18a018" stroke-width="1.1"/>
<polygon points="51.4,329.4 55.0,327.4 57.8,329.2 54.0,331.4" fill="#e0e3e6" stroke="#b4b8bc" stroke-width="0.4"/><path d="M54.4,329.38 L57.6,326.17999999999995" stroke="#b4b8bc" stroke-width="0.9"/><circle cx="53.6" cy="329.38" r="1" fill="none" stroke="#b4b8bc" stroke-width="0.4"/>
<rect x="40.7" y="335.22" width="6.4" height="6.4" fill="#fff" stroke="#555" stroke-width="0.6"/>
<path d="M42,338.32 L43.6,340.12 L46.2,336.32" fill="none" stroke="#18a018" stroke-width="1.1"/>
<rect x="54.8" y="335.12" width="2.2" height="5.6" rx="1" fill="#1c94c6"/><rect x="51.8" y="335.12" width="1.8" height="5.6" rx="0.9" fill="#e0201c"/><path d="M51.4,341.32 L57.8,341.32" stroke="#e0201c" stroke-width="0.9"/>
<rect x="40.7" y="344.36" width="6.4" height="6.4" fill="#fff" stroke="#555" stroke-width="0.6"/>
<path d="M42,347.46 L43.6,349.26 L46.2,345.46" fill="none" stroke="#18a018" stroke-width="1.1"/>
<polygon points="51.4,347.7 55.0,345.7 57.8,347.5 54.0,349.7" fill="#e0e3e6" stroke="#b4b8bc" stroke-width="0.4"/><path d="M54.4,347.66 L57.6,344.46" stroke="#b4b8bc" stroke-width="0.9"/><circle cx="53.6" cy="347.66" r="1" fill="none" stroke="#b4b8bc" stroke-width="0.4"/>
<rect x="40.7" y="353.50" width="6.4" height="6.4" fill="#fff" stroke="#555" stroke-width="0.6"/>
<path d="M42,356.60 L43.6,358.40 L46.2,354.60" fill="none" stroke="#18a018" stroke-width="1.1"/>
<rect x="54.8" y="353.4" width="2.2" height="5.6" rx="1" fill="#1c94c6"/><rect x="51.8" y="353.4" width="1.8" height="5.6" rx="0.9" fill="#e0201c"/><path d="M51.4,359.59999999999997 L57.8,359.59999999999997" stroke="#e0201c" stroke-width="0.9"/>
<rect x="40.7" y="362.64" width="6.4" height="6.4" fill="#fff" stroke="#555" stroke-width="0.6"/>
<path d="M42,365.74 L43.6,367.54 L46.2,363.74" fill="none" stroke="#18a018" stroke-width="1.1"/>
<path d="M52,368.74 L53.4,364.94000000000005 L56,366.74 L57.6,363.34000000000003" stroke="#b4b8bc" stroke-width="0.7" fill="none"/><circle cx="57" cy="368.14000000000004" r="0.6" fill="#b4b8bc"/>
<rect x="40.7" y="371.78" width="6.4" height="6.4" fill="#fff" stroke="#555" stroke-width="0.6"/>
<path d="M42,374.88 L43.6,376.68 L46.2,372.88" fill="none" stroke="#18a018" stroke-width="1.1"/>
<path d="M52,377.88 L53.4,374.08000000000004 L56,375.88 L57.6,372.48" stroke="#b4b8bc" stroke-width="0.7" fill="none"/><circle cx="57" cy="377.28000000000003" r="0.6" fill="#b4b8bc"/>
<rect x="40.7" y="380.92" width="6.4" height="6.4" fill="#fff" stroke="#555" stroke-width="0.6"/>
<path d="M42,384.02 L43.6,385.82 L46.2,382.02" fill="none" stroke="#18a018" stroke-width="1.1"/>
<path d="M52,387.02 L53.4,383.22 L56,385.02 L57.6,381.62" stroke="#b4b8bc" stroke-width="0.7" fill="none"/><circle cx="57" cy="386.42" r="0.6" fill="#b4b8bc"/>
<rect x="40.7" y="390.06" width="6.4" height="6.4" fill="#fff" stroke="#555" stroke-width="0.6"/>
<path d="M42,393.16 L43.6,394.96 L46.2,391.16" fill="none" stroke="#18a018" stroke-width="1.1"/>
<path d="M51.2,392.76 Q53,390.15999999999997 55.6,391.15999999999997 L57.8,393.36 Q55.6,393.15999999999997 (54,),396.15999999999997Z" fill="#1c94c6"/><path d="M51.6,394.15999999999997 L54.4,392.15999999999997" stroke="#e0201c" stroke-width="1.1"/><polygon points="56.0,391.2 54.8,393.4 53.6,391.6" fill="#e0201c"/>
<rect x="40.7" y="399.20" width="6.4" height="6.4" fill="#fff" stroke="#555" stroke-width="0.6"/>
<path d="M42,402.30 L43.6,404.10 L46.2,400.30" fill="none" stroke="#18a018" stroke-width="1.1"/>
<polygon points="51.2,402.9 54.6,401.7 57.9,403.5 54.2,405.7" fill="#1c94c6"/><polygon points="54.2,403.5 57.9,403.5 54.2,405.7" fill="#ffd21e"/><path d="M52,399.50000000000006 L54.6,402.3" stroke="#e0201c" stroke-width="1.1"/><polygon points="55.6,403.3 53.2,402.7 54.8,401.1" fill="#e0201c"/>
<rect x="40.7" y="408.34" width="6.4" height="6.4" fill="#fff" stroke="#555" stroke-width="0.6"/>
<path d="M42,411.44 L43.6,413.24 L46.2,409.44" fill="none" stroke="#18a018" stroke-width="1.1"/>
<polygon points="51.2,412.0 54.6,410.8 57.9,412.6 54.2,414.8" fill="#1c94c6"/><polygon points="54.2,412.6 57.9,412.6 54.2,414.8" fill="#ffd21e"/><path d="M52,408.64000000000004 L54.6,411.44" stroke="#e0201c" stroke-width="1.1"/><polygon points="55.6,412.4 53.2,411.8 54.8,410.2" fill="#e0201c"/>
<rect x="40.7" y="417.48" width="6.4" height="6.4" fill="#fff" stroke="#555" stroke-width="0.6"/>
<path d="M42,420.58 L43.6,422.38 L46.2,418.58" fill="none" stroke="#18a018" stroke-width="1.1"/>
<polygon points="51.2,421.2 54.6,420.0 57.9,421.8 54.2,424.0" fill="#1c94c6"/><polygon points="54.2,421.8 57.9,421.8 54.2,424.0" fill="#ffd21e"/><path d="M52,417.78000000000003 L54.6,420.58" stroke="#e0201c" stroke-width="1.1"/><polygon points="55.6,421.6 53.2,421.0 54.8,419.4" fill="#e0201c"/>
<rect x="40.7" y="426.62" width="6.4" height="6.4" fill="#fff" stroke="#555" stroke-width="0.6"/>
<path d="M42,429.72 L43.6,431.52 L46.2,427.72" fill="none" stroke="#18a018" stroke-width="1.1"/>
<polygon points="51.2,429.3 54.6,427.3 57.9,429.3 54.4,431.3" fill="#1c94c6"/><polygon points="51.2,429.3 54.4,431.3 57.9,429.3 57.9,430.9 54.4,433.1 51.2,430.9" fill="#ffd21e"/><path d="M52.6,429.32 L54.6,428.12 L56.6,429.32" stroke="#42bce0" stroke-width="0.5" fill="none"/>
<rect x="40.7" y="435.76" width="6.4" height="6.4" fill="#fff" stroke="#555" stroke-width="0.6"/>
<path d="M42,438.86 L43.6,440.66 L46.2,436.86" fill="none" stroke="#18a018" stroke-width="1.1"/>
<polygon points="51.4,439.1 55.0,437.1 57.8,438.9 54.0,441.1" fill="#e0e3e6" stroke="#b4b8bc" stroke-width="0.4"/><path d="M54.4,439.06 L57.6,435.85999999999996" stroke="#b4b8bc" stroke-width="0.9"/><circle cx="53.6" cy="439.06" r="1" fill="none" stroke="#b4b8bc" stroke-width="0.4"/>
<rect x="40.7" y="444.90" width="6.4" height="6.4" fill="#fff" stroke="#555" stroke-width="0.6"/>
<path d="M42,448.00 L43.6,449.80 L46.2,446.00" fill="none" stroke="#18a018" stroke-width="1.1"/>
<polygon points="51.3,446.6 54.8,445.0 57.8,446.2 54.4,448.0" fill="#42bce0"/><polygon points="51.3,446.6 54.4,448.0 54.4,451.6 51.4,450.2" fill="#ffd21e"/><polygon points="54.4,448.0 57.8,446.2 57.8,449.8 54.4,451.6" fill="#0d6796"/>
<rect x="40.7" y="454.04" width="6.4" height="6.4" fill="#fff" stroke="#555" stroke-width="0.6"/>
<path d="M42,457.14 L43.6,458.94 L46.2,455.14" fill="none" stroke="#18a018" stroke-width="1.1"/>
<polygon points="51.2,456.1 54.4,454.3 56.0,455.1 53.0,456.9" fill="#42bce0"/><polygon points="51.2,456.1 54.2,457.7 54.2,460.7 51.2,459.1" fill="#1c94c6"/><polygon points="54.2,458.1 57.8,456.7 57.8,458.9 54.2,460.7" fill="#0d6796"/><path d="M53,456.94 L56,455.14 Q57.9,455.54 57.8,457.14 L54.2,458.54 Q54.2,457.34000000000003 53,456.94Z" fill="#ffd21e"/>
<rect x="40.7" y="463.18" width="6.4" height="6.4" fill="#fff" stroke="#555" stroke-width="0.6"/>
<path d="M42,466.28 L43.6,468.08 L46.2,464.28" fill="none" stroke="#18a018" stroke-width="1.1"/>
<polygon points="51.2,465.3 54.4,463.5 56.0,464.3 53.0,466.1" fill="#42bce0"/><polygon points="51.2,465.3 54.2,466.9 54.2,469.9 51.2,468.3" fill="#1c94c6"/><polygon points="54.2,467.3 57.8,465.9 57.8,468.1 54.2,469.9" fill="#0d6796"/><path d="M53,466.08 L56,464.28 Q57.9,464.68 57.8,466.28 L54.2,467.68 Q54.2,466.48 53,466.08Z" fill="#ffd21e"/>
<rect x="40.7" y="472.32" width="6.4" height="6.4" fill="#fff" stroke="#555" stroke-width="0.6"/>
<path d="M42,475.42 L43.6,477.22 L46.2,473.42" fill="none" stroke="#18a018" stroke-width="1.1"/>
<polygon points="51.2,474.4 54.4,472.6 56.0,473.4 53.0,475.2" fill="#42bce0"/><polygon points="51.2,474.4 54.2,476.0 54.2,479.0 51.2,477.4" fill="#1c94c6"/><polygon points="54.2,476.4 57.8,475.0 57.8,477.2 54.2,479.0" fill="#0d6796"/><path d="M53,475.22 L56,473.42 Q57.9,473.82000000000005 57.8,475.42 L54.2,476.82000000000005 Q54.2,475.62000000000006 53,475.22Z" fill="#ffd21e"/>
<rect x="40.7" y="481.46" width="6.4" height="6.4" fill="#fff" stroke="#555" stroke-width="0.6"/>
<path d="M42,484.56 L43.6,486.36 L46.2,482.56" fill="none" stroke="#18a018" stroke-width="1.1"/>
<polygon points="51.2,483.6 54.4,481.8 56.0,482.6 53.0,484.4" fill="#42bce0"/><polygon points="51.2,483.6 54.2,485.2 54.2,488.2 51.2,486.6" fill="#1c94c6"/><polygon points="54.2,485.6 57.8,484.2 57.8,486.4 54.2,488.2" fill="#0d6796"/><path d="M53,484.36 L56,482.56 Q57.9,482.96000000000004 57.8,484.56 L54.2,485.96000000000004 Q54.2,484.76000000000005 53,484.36Z" fill="#ffd21e"/>
<path d="M43.6,493.90 L48.4,493.90" stroke="#d81818" stroke-width="1.9"/><polygon points="40.4,493.90 44.6,490.90 44.6,496.90" fill="#d81818"/>
<polygon points="167.8,117.8 172.8,117.8 170.3,114.8" fill="#444"/>
<polygon points="167.8,493.2 172.8,493.2 170.3,496.2" fill="#444"/>
<path d="M169,330.8 L172,330.8 M169,332 L172,332 M169,333.2 L172,333.2" stroke="#8a8e92" stroke-width="0.5"/>
<polygon points="83.8,104.4 86.2,104.4 85,105.9" fill="#333"/>
<polygon points="164.6,100.8 173.4,100.8 170,104.6 170,109 168,108 168,104.6" fill="#1ea6d6"/>
<rect x="159.2" y="90" width="3.6" height="3.2" fill="none" stroke="#a8acb0" stroke-width="0.6"/><rect x="160.2" y="91" width="1.6" height="1.2" fill="#a8acb0"/>
<path d="M167.6,89.6 L172.8,93.8 M172.8,89.6 L167.6,93.8" stroke="#b4b8bc" stroke-width="0.6"/><rect x="167.6" y="89.6" width="5.2" height="4.2" fill="none" stroke="#d0d4d8" stroke-width="0.3"/>
<polygon points="3.4,103.6 8,102 12.6,103.6 8,105.4" fill="#5cc6ea"/><polygon points="3.4,103.6 8,105.4 8,108 3.4,106.2" fill="#1f9ccc"/><polygon points="8,105.4 12.6,103.6 12.6,106.2 8,108" fill="#0f6f9f"/><path d="M4,108.6 L4,112.4 L7,112.4 M4,110.6 L7,110.6" stroke="#8a8e92" stroke-width="0.5" fill="none"/><rect x="7.6" y="109.4" width="4" height="3.4" fill="none" stroke="#8a8e92" stroke-width="0.5"/>
<rect x="5.4" y="128.8" width="4.6" height="3.2" fill="#2a7cc8"/><rect x="2.6" y="134.6" width="4" height="3" fill="#2a8cd8"/><rect x="9" y="134.6" width="4" height="3" fill="#2a8cd8"/><path d="M7.6,132 L7.6,133.4 M4.6,134.6 L4.6,133.4 L11,133.4 L11,134.6" stroke="#6a8eb0" stroke-width="0.5" fill="none"/>
<rect x="2.8" y="152.8" width="10.6" height="10.4" fill="#eaf3fb" stroke="#3a8cd0" stroke-width="0.7"/><rect x="2.8" y="152.8" width="10.6" height="2" fill="#3a8cd0"/><polygon points="5.4,158 8.2,156.8 11,158 11,161 8.2,162.2 5.4,161" fill="#f6c020"/><polygon points="5.4,158 8.2,159.2 11,158 8.2,156.8" fill="#fde27a"/>
<rect x="2.6" y="177.6" width="10.8" height="9.6" fill="#6ab4e8" stroke="#2a7cc8" stroke-width="0.5"/><polygon points="2.6,187.2 6.4,182.4 9,185 11,183.4 13.4,187.2" fill="#e86030"/><circle cx="10.6" cy="180.2" r="1.3" fill="#fde27a"/><circle cx="5.4" cy="181.4" r="1.6" fill="#f4f8fc"/>
<circle cx="8.6" cy="203.4" r="2.6" fill="#f6c020"/><path d="M3.4,211.4 Q3.8,206.2 8.6,206.2 Q13.4,206.2 13.6,211.4Z" fill="#2a7cc8"/><path d="M3,211.6 L14,211.6" stroke="#1a5a9a" stroke-width="0.6"/>
</svg>
<div class="b " style="left:17.4px;top:501px;width:157.6px;height:11.8px;background:#ffffff;border:0.6px solid #c4c8cc;"></div>
<svg width="40" height="20" viewBox="0 500 40 20" style="left:0;top:500px"><polygon points="20.4,504.6 20.4,509.2 23.8,506.9" fill="#333"/></svg>
<span class="t " style="left:27.50px;top:504.98px;font-size:6.164px;color:#222;letter-spacing:-0.302px;transform:scaleY(1.087);font-weight:bold;">Replay</span>
<span class="t " style="left:2.80px;top:519.18px;font-size:6.164px;color:#222;letter-spacing:-0.000px;transform:scaleY(1.087);">Select command or entity.</span>
<div class="b " style="left:744.2px;top:515.4px;width:0.6px;height:11.4px;background:#b8bcc0;"></div>
<div class="b " style="left:752.2px;top:516px;width:11.4px;height:10.6px;background:#fbdc86;border:0.6px solid #e0b040;"></div>
<div class="b " style="left:796.8px;top:515.2px;width:178.2px;height:11.4px;background:#ffffff;border:0.5px solid #d0d4d8;"></div>
<svg width="60" height="14" viewBox="750 514 60 14" style="left:750px;top:514px"><rect x="755.2" y="518" width="5.6" height="6.6" fill="#f4f4f4" stroke="#7a7e82" stroke-width="0.5"/><path d="M757,519.4 L757,524 M758.6,519.4 L758.6,524" stroke="#d03030" stroke-width="0.6"/><rect x="768.6" y="517.6" width="8" height="5.6" fill="#2a8cd8" stroke="#1a5a9a" stroke-width="0.4"/><rect x="771" y="523.4" width="3.2" height="1.6" fill="#444"/><path d="M770,521 L775.2,521" stroke="#cfe6f6" stroke-width="0.6"/><rect x="783.4" y="517.4" width="7.2" height="7.4" fill="#eaf3fb" stroke="#3a8cd0" stroke-width="0.6"/><rect x="783.4" y="517.4" width="7.2" height="1.8" fill="#3a8cd0"/><path d="M785,522 L789,522" stroke="#8ab4d8" stroke-width="0.6"/></svg>
<div class="b " style="left:0px;top:528px;width:24.4px;height:2px;background:#0a0f14;"></div>
<div class="b " style="left:199px;top:528px;width:776px;height:2px;background:#0a0f14;"></div>
<div class="b " style="left:24.4px;top:528px;width:174.6px;height:2px;background:#f2f3f4;"></div>
<div class="b " style="left:178.6px;top:98.7px;width:795.2px;height:414.1px;background:linear-gradient(180deg,#ffffff 0%,#f4f4f4 8%,#d9d9d9 30%,#a9a9a9 58%,#7d7d7d 82%,#606060 100%);"></div>
<div class="b " style="left:175.4px;top:98.7px;width:3.2px;height:414.6px;background:#eceef0;"></div>
<svg width="975" height="530" viewBox="0 0 975 530" style="left:0;top:0">
<defs>
<linearGradient id="gStem" gradientUnits="userSpaceOnUse" x1="590" y1="440" x2="638" y2="440"><stop offset="0" stop-color="#70480c"/><stop offset="0.14" stop-color="#8c6014"/><stop offset="0.28" stop-color="#c8983e"/><stop offset="0.4" stop-color="#a47218"/><stop offset="0.62" stop-color="#86580c"/><stop offset="0.85" stop-color="#624006"/><stop offset="1" stop-color="#4a2e03"/></linearGradient>
<linearGradient id="gCone" gradientUnits="userSpaceOnUse" x1="540" y1="360" x2="700" y2="360"><stop offset="0" stop-color="#d39c08"/><stop offset="0.4" stop-color="#d8a10a"/><stop offset="0.68" stop-color="#d09808"/><stop offset="0.85" stop-color="#c08c07"/><stop offset="1" stop-color="#a67805"/></linearGradient>
<linearGradient id="gCy" gradientUnits="userSpaceOnUse" x1="539.3" y1="263.1" x2="656.8" y2="238.7"><stop offset="0" stop-color="#10d6d5"/><stop offset="0.18" stop-color="#18dedd"/><stop offset="0.28" stop-color="#26ebe9"/><stop offset="0.333" stop-color="#2af0ec"/><stop offset="0.40" stop-color="#24e9e7"/><stop offset="0.55" stop-color="#12d8d7"/><stop offset="0.75" stop-color="#08d0cf"/><stop offset="1" stop-color="#04cccb"/></linearGradient>
<radialGradient id="gOr" gradientUnits="userSpaceOnUse" cx="668" cy="258" r="68"><stop offset="0" stop-color="#d59e0a"/><stop offset="0.55" stop-color="#d39c0a"/><stop offset="0.75" stop-color="#c4900a"/><stop offset="0.9" stop-color="#a0720a"/><stop offset="1" stop-color="#8a6006"/></radialGradient>
<radialGradient id="gOrSh" gradientUnits="userSpaceOnUse" cx="660" cy="215" r="95"><stop offset="0" stop-color="#000" stop-opacity="0"/><stop offset="1" stop-color="#000" stop-opacity="0"/></radialGradient>
<linearGradient id="gLipHl" gradientUnits="userSpaceOnUse" x1="545" y1="0" x2="700" y2="0"><stop offset="0" stop-color="#e8b428"/><stop offset="0.35" stop-color="#f6dc7a"/><stop offset="0.55" stop-color="#fff4c8"/><stop offset="0.8" stop-color="#f4d45a"/><stop offset="1" stop-color="#e2a812"/></linearGradient>
<linearGradient id="gWall" gradientUnits="userSpaceOnUse" x1="412" y1="240" x2="432" y2="230"><stop offset="0" stop-color="#08c2c1"/><stop offset="1" stop-color="#0cd0cf"/></linearGradient>
<linearGradient id="gFil" gradientUnits="userSpaceOnUse" x1="446" y1="235" x2="430.5" y2="249.2"><stop offset="0" stop-color="#04cccb"/><stop offset="0.35" stop-color="#06c4c3"/><stop offset="1" stop-color="#08aeae"/></linearGradient>
</defs>
<path d="M464,289 L590.9,405.4 L592.5,406.3 L536.8,330.8 L520,316 Z" fill="#04cccb"/>
<path d="M530,322 L536.8,330.8 L592.5,406.3 Q601.3,410.6 611.7,412.2 Q622,411.7 632.4,408.3 L641.2,401.6 L700,329.8 L702,315 L540,300 Z" fill="url(#gCone)"/>
<path d="M587.3,402.6 L592.5,406.3 Q601.3,410.6 611.7,412.2 Q622,411.7 632.4,408.3 L641.2,401.6 L636,435 L629.3,476.5 Q626,480.8 622,482.2 Q618,483.6 613.8,483.8 Q610,483.6 606.5,482.2 Q601,480 598.2,475.5 L592,435 Z" fill="url(#gStem)"/>
<path d="M587.3,402.6 L592.5,406.3 Q601.3,410.6 611.7,412.2 Q622,411.7 632.4,408.3 L641.2,401.6" fill="none" stroke="#4a3206" stroke-width="0.6"/>
<path d="M401.7,225.4C401.4,222.5 401.5,220.2 401.7,218.0C401.9,215.8 402.4,214.1 403.0,212.0C403.6,209.9 404.5,208.0 405.6,205.3C406.7,202.6 408.0,199.0 409.7,195.9C411.4,192.8 413.5,189.7 415.9,186.6C418.3,183.5 421.2,180.1 424.2,177.3C427.1,174.5 431.0,171.9 433.6,170.0C436.2,168.1 437.9,167.3 440.0,166.0C442.1,164.7 444.1,163.3 446.2,162.0C448.2,160.7 450.2,159.4 452.3,158.3C454.4,157.2 456.4,156.1 458.5,155.2C460.6,154.3 462.6,153.6 464.6,152.8C466.7,152.0 468.8,151.3 470.8,150.6C472.9,149.9 474.8,149.4 476.9,148.8C478.9,148.2 481.1,147.7 483.1,147.2C485.2,146.7 487.1,146.3 489.2,146.0C491.2,145.7 493.5,145.4 495.4,145.1C497.3,144.8 498.1,144.7 500.7,144.3C503.3,143.9 507.6,143.2 511.1,142.8C514.6,142.4 518.0,142.3 521.5,142.1C525.0,141.9 528.4,141.9 531.9,141.8C535.4,141.7 538.8,141.7 542.2,141.6C545.7,141.5 549.1,141.4 552.6,141.3C556.1,141.2 559.3,141.2 563.0,141.3C566.7,141.4 571.3,141.5 575.0,141.9C578.7,142.3 581.9,142.8 585.4,143.5C588.9,144.2 592.2,145.0 595.7,146.1C599.2,147.2 602.6,148.6 606.1,150.2C609.6,151.8 613.0,153.6 616.5,155.4C620.0,157.2 621.7,158.2 626.9,161.1C632.1,163.9 640.7,168.6 647.6,172.5C654.5,176.4 662.1,180.8 668.4,184.5C674.7,188.2 679.2,191.5 685.2,195.0C691.2,198.5 699.6,202.6 704.4,205.4C709.2,208.2 711.0,209.3 714.2,211.6C717.4,213.8 720.7,216.3 723.6,218.9C726.5,221.5 729.3,224.3 731.9,227.2C734.5,230.1 737.0,233.7 739.1,236.5C741.2,239.3 742.8,241.6 744.3,243.8C745.8,246.1 747.1,247.9 748.0,250.0C748.9,252.1 749.4,254.3 749.8,256.5C750.2,258.7 750.5,260.6 750.4,263.3C750.3,266.0 750.1,269.5 749.4,272.6C748.7,275.7 747.5,278.9 746.2,282.0C744.9,285.1 743.4,288.2 741.6,291.3C739.8,294.4 737.8,297.5 735.4,300.6C733.0,303.7 730.6,307.1 727.0,310.0C723.4,312.9 718.5,315.6 714.0,318.0C709.5,320.4 703.4,322.7 700.0,324.2C696.6,325.7 696.2,325.8 693.4,326.8C690.6,327.9 686.5,329.3 683.0,330.5C679.5,331.7 676.1,332.8 672.6,333.9C669.1,335.0 665.7,336.1 662.2,337.0C658.8,337.9 655.4,338.6 651.9,339.4C648.4,340.1 645.0,340.9 641.5,341.5C638.0,342.1 634.6,342.5 631.1,342.9C627.6,343.3 624.2,343.8 620.7,344.0C617.2,344.2 613.9,344.3 610.4,344.3C606.9,344.3 602.8,344.1 600.0,344.0C597.2,343.9 596.2,343.8 593.4,343.6C590.6,343.4 586.5,343.1 583.0,342.7C579.5,342.3 576.1,341.8 572.6,341.2C569.1,340.6 565.7,339.9 562.2,339.1C558.8,338.3 555.4,337.5 551.9,336.5C548.4,335.5 545.0,334.3 541.5,332.9C538.0,331.5 534.6,329.8 531.1,328.2C527.6,326.6 524.2,324.8 520.7,323.0C517.2,321.2 513.9,319.3 510.4,317.3C506.9,315.3 503.9,313.1 500.0,310.8C496.1,308.6 491.1,305.9 487.2,303.8C483.3,301.7 480.3,300.0 476.9,298.0C473.4,296.0 470.0,293.8 466.5,291.8C463.0,289.8 459.6,288.0 456.1,286.1C452.6,284.2 449.1,282.4 445.7,280.4C442.2,278.4 438.1,275.9 435.4,274.2C432.6,272.5 431.6,271.9 429.2,270.0C426.8,268.1 423.5,265.1 420.9,262.7C418.3,260.3 415.9,258.3 413.7,255.5C411.4,252.7 409.1,249.4 407.4,246.1C405.7,242.8 404.2,239.1 403.3,235.7C402.4,232.2 402.0,228.3 401.7,225.4Z" fill="#dc0202" stroke="#4a0000" stroke-width="0.5"/>
<clipPath id="cOuter"><path d="M401.7,225.4C401.4,222.5 401.5,220.2 401.7,218.0C401.9,215.8 402.4,214.1 403.0,212.0C403.6,209.9 404.5,208.0 405.6,205.3C406.7,202.6 408.0,199.0 409.7,195.9C411.4,192.8 413.5,189.7 415.9,186.6C418.3,183.5 421.2,180.1 424.2,177.3C427.1,174.5 431.0,171.9 433.6,170.0C436.2,168.1 437.9,167.3 440.0,166.0C442.1,164.7 444.1,163.3 446.2,162.0C448.2,160.7 450.2,159.4 452.3,158.3C454.4,157.2 456.4,156.1 458.5,155.2C460.6,154.3 462.6,153.6 464.6,152.8C466.7,152.0 468.8,151.3 470.8,150.6C472.9,149.9 474.8,149.4 476.9,148.8C478.9,148.2 481.1,147.7 483.1,147.2C485.2,146.7 487.1,146.3 489.2,146.0C491.2,145.7 493.5,145.4 495.4,145.1C497.3,144.8 498.1,144.7 500.7,144.3C503.3,143.9 507.6,143.2 511.1,142.8C514.6,142.4 518.0,142.3 521.5,142.1C525.0,141.9 528.4,141.9 531.9,141.8C535.4,141.7 538.8,141.7 542.2,141.6C545.7,141.5 549.1,141.4 552.6,141.3C556.1,141.2 559.3,141.2 563.0,141.3C566.7,141.4 571.3,141.5 575.0,141.9C578.7,142.3 581.9,142.8 585.4,143.5C588.9,144.2 592.2,145.0 595.7,146.1C599.2,147.2 602.6,148.6 606.1,150.2C609.6,151.8 613.0,153.6 616.5,155.4C620.0,157.2 621.7,158.2 626.9,161.1C632.1,163.9 640.7,168.6 647.6,172.5C654.5,176.4 662.1,180.8 668.4,184.5C674.7,188.2 679.2,191.5 685.2,195.0C691.2,198.5 699.6,202.6 704.4,205.4C709.2,208.2 711.0,209.3 714.2,211.6C717.4,213.8 720.7,216.3 723.6,218.9C726.5,221.5 729.3,224.3 731.9,227.2C734.5,230.1 737.0,233.7 739.1,236.5C741.2,239.3 742.8,241.6 744.3,243.8C745.8,246.1 747.1,247.9 748.0,250.0C748.9,252.1 749.4,254.3 749.8,256.5C750.2,258.7 750.5,260.6 750.4,263.3C750.3,266.0 750.1,269.5 749.4,272.6C748.7,275.7 747.5,278.9 746.2,282.0C744.9,285.1 743.4,288.2 741.6,291.3C739.8,294.4 737.8,297.5 735.4,300.6C733.0,303.7 730.6,307.1 727.0,310.0C723.4,312.9 718.5,315.6 714.0,318.0C709.5,320.4 703.4,322.7 700.0,324.2C696.6,325.7 696.2,325.8 693.4,326.8C690.6,327.9 686.5,329.3 683.0,330.5C679.5,331.7 676.1,332.8 672.6,333.9C669.1,335.0 665.7,336.1 662.2,337.0C658.8,337.9 655.4,338.6 651.9,339.4C648.4,340.1 645.0,340.9 641.5,341.5C638.0,342.1 634.6,342.5 631.1,342.9C627.6,343.3 624.2,343.8 620.7,344.0C617.2,344.2 613.9,344.3 610.4,344.3C606.9,344.3 602.8,344.1 600.0,344.0C597.2,343.9 596.2,343.8 593.4,343.6C590.6,343.4 586.5,343.1 583.0,342.7C579.5,342.3 576.1,341.8 572.6,341.2C569.1,340.6 565.7,339.9 562.2,339.1C558.8,338.3 555.4,337.5 551.9,336.5C548.4,335.5 545.0,334.3 541.5,332.9C538.0,331.5 534.6,329.8 531.1,328.2C527.6,326.6 524.2,324.8 520.7,323.0C517.2,321.2 513.9,319.3 510.4,317.3C506.9,315.3 503.9,313.1 500.0,310.8C496.1,308.6 491.1,305.9 487.2,303.8C483.3,301.7 480.3,300.0 476.9,298.0C473.4,296.0 470.0,293.8 466.5,291.8C463.0,289.8 459.6,288.0 456.1,286.1C452.6,284.2 449.1,282.4 445.7,280.4C442.2,278.4 438.1,275.9 435.4,274.2C432.6,272.5 431.6,271.9 429.2,270.0C426.8,268.1 423.5,265.1 420.9,262.7C418.3,260.3 415.9,258.3 413.7,255.5C411.4,252.7 409.1,249.4 407.4,246.1C405.7,242.8 404.2,239.1 403.3,235.7C402.4,232.2 402.0,228.3 401.7,225.4Z"/></clipPath>
<path d="M746.2,282.0C745.4,283.6 743.4,288.2 741.6,291.3C739.8,294.4 737.8,297.5 735.4,300.6C733.0,303.7 730.6,307.1 727.0,310.0C723.4,312.9 718.5,315.6 714.0,318.0C709.5,320.4 703.4,322.7 700.0,324.2C696.6,325.7 696.2,325.8 693.4,326.8C690.6,327.9 686.5,329.3 683.0,330.5C679.5,331.7 676.1,332.8 672.6,333.9C669.1,335.0 665.7,336.1 662.2,337.0C658.8,337.9 655.4,338.6 651.9,339.4C648.4,340.1 645.0,340.9 641.5,341.5C638.0,342.1 634.6,342.5 631.1,342.9C627.6,343.3 624.2,343.8 620.7,344.0C617.2,344.2 613.9,344.3 610.4,344.3C606.9,344.3 602.8,344.1 600.0,344.0C597.2,343.9 596.2,343.8 593.4,343.6C590.6,343.4 586.5,343.1 583.0,342.7C579.5,342.3 576.1,341.8 572.6,341.2C569.1,340.6 565.7,339.9 562.2,339.1C558.8,338.3 555.4,337.5 551.9,336.5C548.4,335.5 545.0,334.3 541.5,332.9C538.0,331.5 534.6,329.8 531.1,328.2C527.6,326.6 524.2,324.8 520.7,323.0C517.2,321.2 513.9,319.3 510.4,317.3C506.9,315.3 503.9,313.1 500.0,310.8C496.1,308.6 491.1,305.9 487.2,303.8C483.3,301.7 480.3,300.0 476.9,298.0C473.4,296.0 470.0,293.8 466.5,291.8C463.0,289.8 459.6,288.0 456.1,286.1C452.6,284.2 449.1,282.4 445.7,280.4C442.2,278.4 438.1,275.9 435.4,274.2C432.6,272.5 431.6,271.9 429.2,270.0C426.8,268.1 423.5,265.1 420.9,262.7C418.3,260.3 415.9,258.3 413.7,255.5C411.4,252.7 409.1,249.4 407.4,246.1C405.7,242.8 404.2,239.1 403.3,235.7C402.4,232.2 402.0,228.3 401.7,225.4C401.4,222.5 401.7,219.2 401.7,218.0" fill="none" stroke="#c20000" stroke-width="4.6" clip-path="url(#cOuter)"/>
<path d="M744.1,281.0C743.4,282.5 741.4,287.1 739.6,290.1C737.9,293.2 735.9,296.2 733.6,299.2C731.2,302.2 729.0,305.4 725.5,308.2C722.1,311.0 717.3,313.7 712.9,316.0C708.5,318.3 702.5,320.6 699.1,322.1C695.7,323.5 695.4,323.6 692.6,324.6C689.8,325.7 685.7,327.1 682.3,328.3C678.8,329.5 675.4,330.6 671.9,331.7C668.5,332.8 665.0,333.9 661.6,334.8C658.2,335.7 654.8,336.4 651.4,337.2C648.0,337.9 644.5,338.7 641.1,339.2C637.7,339.8 634.3,340.2 630.8,340.6C627.4,341.0 623.9,341.5 620.5,341.7C617.1,341.9 613.8,342.0 610.4,342.0C607.0,342.0 602.9,341.8 600.1,341.7C597.3,341.6 596.4,341.5 593.6,341.3C590.8,341.1 586.7,340.8 583.3,340.4C579.8,340.0 576.4,339.5 573.0,338.9C569.6,338.3 566.1,337.6 562.7,336.9C559.3,336.1 556.0,335.3 552.6,334.3C549.2,333.3 545.8,332.1 542.4,330.8C538.9,329.4 535.5,327.8 532.1,326.1C528.7,324.5 525.2,322.8 521.8,321.0C518.4,319.2 515.0,317.3 511.6,315.3C508.1,313.3 505.0,311.1 501.2,308.8C497.3,306.6 492.2,303.9 488.3,301.8C484.5,299.7 481.5,298.0 478.1,296.0C474.6,294.0 471.1,291.8 467.6,289.8C464.2,287.8 460.7,286.0 457.2,284.1C453.7,282.2 450.3,280.4 446.8,278.4C443.4,276.4 439.3,274.0 436.6,272.3C433.9,270.6 433.0,270.1 430.6,268.2C428.3,266.3 425.0,263.4 422.5,261.0C419.9,258.7 417.7,256.7 415.5,254.0C413.3,251.4 411.1,248.2 409.4,245.0C407.8,241.9 406.4,238.4 405.5,235.1C404.6,231.8 404.2,228.0 404.0,225.2C403.7,222.3 404.0,219.2 404.0,218.0" fill="none" stroke="#6a0000" stroke-width="0.55"/>
<path d="M712.5,314.6C710.2,315.6 701.9,319.3 698.5,320.8C695.1,322.2 694.9,322.3 692.1,323.3C689.3,324.4 685.2,325.8 681.8,327.0C678.4,328.2 674.9,329.3 671.5,330.4C668.1,331.4 664.6,332.5 661.2,333.4C657.9,334.3 654.5,335.0 651.1,335.8C647.7,336.5 644.3,337.3 640.9,337.9C637.5,338.4 634.1,338.8 630.7,339.2C627.3,339.6 623.8,340.1 620.5,340.3C617.1,340.5 613.8,340.6 610.4,340.6C607.0,340.6 602.9,340.4 600.2,340.3C597.4,340.2 596.5,340.1 593.7,339.9C590.9,339.7 586.8,339.4 583.4,339.0C580.0,338.6 576.6,338.1 573.2,337.6C569.8,337.0 566.4,336.3 563.0,335.5C559.6,334.7 556.3,334.0 553.0,333.0C549.6,332.0 546.2,330.8 542.9,329.5C539.5,328.1 536.1,326.5 532.7,324.9C529.3,323.2 525.8,321.5 522.4,319.7C519.0,317.9 515.7,316.1 512.3,314.1C508.9,312.1 505.7,309.9 501.9,307.6C498.0,305.3 492.8,302.7 489.0,300.6C485.1,298.4 482.2,296.8 478.8,294.8C475.3,292.8 471.8,290.6 468.3,288.6C464.9,286.6 461.3,284.8 457.9,282.9C454.4,281.0 451.0,279.2 447.5,277.2C444.1,275.2 440.1,272.8 437.4,271.1C434.7,269.4 432.3,267.6 431.3,266.9" fill="none" stroke="#8a0000" stroke-width="0.45"/>
<path d="M401.7,225.4C401.4,222.5 401.5,220.2 401.7,218.0C401.9,215.8 402.4,214.1 403.0,212.0C403.6,209.9 404.5,208.0 405.6,205.3C406.7,202.6 408.0,199.0 409.7,195.9C411.4,192.8 413.5,189.7 415.9,186.6C418.3,183.5 421.2,180.1 424.2,177.3C427.1,174.5 431.0,171.9 433.6,170.0C436.2,168.1 437.9,167.3 440.0,166.0C442.1,164.7 444.1,163.3 446.2,162.0C448.2,160.7 450.2,159.4 452.3,158.3C454.4,157.2 456.4,156.1 458.5,155.2C460.6,154.3 462.6,153.6 464.6,152.8C466.7,152.0 468.8,151.3 470.8,150.6C472.9,149.9 474.8,149.4 476.9,148.8C478.9,148.2 481.1,147.7 483.1,147.2C485.2,146.7 487.1,146.3 489.2,146.0C491.2,145.7 493.5,145.4 495.4,145.1C497.3,144.8 498.1,144.7 500.7,144.3C503.3,143.9 507.6,143.2 511.1,142.8C514.6,142.4 518.0,142.3 521.5,142.1C525.0,141.9 528.4,141.9 531.9,141.8C535.4,141.7 538.8,141.7 542.2,141.6C545.7,141.5 549.1,141.4 552.6,141.3C556.1,141.2 559.3,141.2 563.0,141.3C566.7,141.4 571.3,141.5 575.0,141.9C578.7,142.3 581.9,142.8 585.4,143.5C588.9,144.2 592.2,145.0 595.7,146.1C599.2,147.2 602.6,148.6 606.1,150.2C609.6,151.8 613.0,153.6 616.5,155.4C620.0,157.2 621.7,158.2 626.9,161.1C632.1,163.9 640.7,168.6 647.6,172.5C654.5,176.4 662.1,180.8 668.4,184.5C674.7,188.2 679.2,191.5 685.2,195.0C691.2,198.5 699.6,202.6 704.4,205.4C709.2,208.2 711.0,209.3 714.2,211.6C717.4,213.8 720.7,216.3 723.6,218.9C726.5,221.5 729.3,224.3 731.9,227.2C734.5,230.1 737.0,233.7 739.1,236.5C741.2,239.3 742.8,241.6 744.3,243.8C745.8,246.1 747.1,247.9 748.0,250.0C748.9,252.1 749.4,254.3 749.8,256.5C750.2,258.7 750.5,260.6 750.4,263.3C750.3,266.0 750.1,269.5 749.4,272.6C748.7,275.7 747.5,278.9 746.2,282.0C744.9,285.1 743.4,288.2 741.6,291.3C739.8,294.4 737.8,297.5 735.4,300.6C733.0,303.7 730.6,307.1 727.0,310.0C723.4,312.9 718.5,315.6 714.0,318.0C709.5,320.4 703.4,322.7 700.0,324.2C696.6,325.7 696.2,325.8 693.4,326.8C690.6,327.9 686.5,329.3 683.0,330.5C679.5,331.7 676.1,332.8 672.6,333.9C669.1,335.0 665.7,336.1 662.2,337.0C658.8,337.9 655.4,338.6 651.9,339.4C648.4,340.1 645.0,340.9 641.5,341.5C638.0,342.1 634.6,342.5 631.1,342.9C627.6,343.3 624.2,343.8 620.7,344.0C617.2,344.2 613.9,344.3 610.4,344.3C606.9,344.3 602.8,344.1 600.0,344.0C597.2,343.9 596.2,343.8 593.4,343.6C590.6,343.4 586.5,343.1 583.0,342.7C579.5,342.3 576.1,341.8 572.6,341.2C569.1,340.6 565.7,339.9 562.2,339.1C558.8,338.3 555.4,337.5 551.9,336.5C548.4,335.5 545.0,334.3 541.5,332.9C538.0,331.5 534.6,329.8 531.1,328.2C527.6,326.6 524.2,324.8 520.7,323.0C517.2,321.2 513.9,319.3 510.4,317.3C506.9,315.3 503.9,313.1 500.0,310.8C496.1,308.6 491.1,305.9 487.2,303.8C483.3,301.7 480.3,300.0 476.9,298.0C473.4,296.0 470.0,293.8 466.5,291.8C463.0,289.8 459.6,288.0 456.1,286.1C452.6,284.2 449.1,282.4 445.7,280.4C442.2,278.4 438.1,275.9 435.4,274.2C432.6,272.5 431.6,271.9 429.2,270.0C426.8,268.1 423.5,265.1 420.9,262.7C418.3,260.3 415.9,258.3 413.7,255.5C411.4,252.7 409.1,249.4 407.4,246.1C405.7,242.8 404.2,239.1 403.3,235.7C402.4,232.2 402.0,228.3 401.7,225.4Z" fill="none" stroke="#4a0000" stroke-width="0.5"/>
<path d="M438.0,187.8C438.2,187.1 438.1,186.4 439.9,185.2C441.7,184.0 447.2,181.7 449.0,180.6C450.8,179.5 450.0,179.4 450.4,178.4C450.8,177.4 450.7,175.9 451.2,174.8C451.7,173.7 452.5,172.8 453.5,172.0C454.5,171.2 455.9,170.3 457.3,169.8C458.7,169.3 460.3,169.1 461.8,169.1C463.3,169.1 465.3,169.9 466.3,170.1C467.3,170.3 465.8,171.3 467.8,170.2C469.8,169.1 475.9,164.8 478.3,163.4C480.7,162.0 480.8,162.1 482.0,161.8C483.2,161.6 484.6,161.6 485.4,161.9C486.2,162.2 486.8,163.0 487.0,163.6C487.2,164.2 486.8,165.1 486.6,165.6C486.4,166.1 489.5,164.6 485.9,166.8C482.3,169.0 471.9,174.9 464.8,179.0C457.8,183.1 447.6,189.2 443.6,191.1C439.6,193.0 441.8,191.0 441.0,190.7C440.2,190.4 439.1,189.9 438.6,189.4C438.1,188.9 437.8,188.5 438.0,187.8Z" fill="#4a0c0c"/>
<path d="M439.2,187.8C439.2,187.2 439.2,187.1 441.0,186.0C442.8,184.9 448.3,182.6 450.0,181.4C451.7,180.2 451.0,180.0 451.4,179.0C451.8,178.0 451.7,176.4 452.2,175.4C452.7,174.4 453.5,173.6 454.4,172.8C455.3,172.0 456.6,171.2 457.8,170.8C459.0,170.4 460.4,170.1 461.8,170.2C463.2,170.3 465.0,171.0 466.0,171.2C467.0,171.4 465.9,172.4 468.0,171.3C470.1,170.2 476.2,166.0 478.6,164.6C481.0,163.2 481.1,163.2 482.2,163.0C483.3,162.8 484.4,163.0 485.0,163.2C485.6,163.4 486.0,163.9 485.8,164.4C485.6,164.9 490.0,162.9 484.0,166.4C478.0,169.9 457.2,181.8 450.0,185.6C442.8,189.4 442.8,189.0 441.0,189.4C439.2,189.8 439.2,188.4 439.2,187.8Z" fill="#b80a0a"/>
<path d="M440.3,188.0C440.3,188.5 440.7,189.2 441.2,189.6C441.7,190.0 439.6,192.3 443.5,190.4C447.4,188.5 457.6,182.3 464.6,178.3C471.6,174.3 482.2,168.5 485.6,166.3C489.0,164.1 485.3,165.4 484.8,165.1C484.3,164.8 483.9,164.5 482.8,164.6C481.7,164.7 480.8,164.5 478.3,165.8C475.8,167.1 470.3,171.5 467.8,172.5C465.3,173.5 464.8,171.9 463.3,171.9C461.8,171.9 460.2,171.9 458.8,172.3C457.4,172.7 455.9,173.4 455.0,174.2C454.1,175.0 453.6,176.1 453.1,177.1C452.6,178.1 452.4,179.3 452.0,180.1C451.6,180.9 452.3,180.9 450.5,182.0C448.7,183.1 443.1,185.6 441.4,186.6C439.7,187.6 440.3,187.5 440.3,188.0Z" fill="#e7e7e7" stroke="#3a0606" stroke-width="0.3"/>
<path d="M421.6,208.9 L528.8,146.8 Q536,143.6 542.2,141.6C543.9,141.6 549.1,141.4 552.6,141.3C556.1,141.2 559.3,141.2 563.0,141.3C566.7,141.4 571.3,141.5 575.0,141.9C578.7,142.3 581.9,142.8 585.4,143.5C588.9,144.2 592.2,145.0 595.7,146.1C599.2,147.2 602.6,148.6 606.1,150.2C609.6,151.8 613.0,153.6 616.5,155.4C620.0,157.2 621.7,158.2 626.9,161.1C632.1,163.9 640.7,168.6 647.6,172.5C654.5,176.4 662.1,180.8 668.4,184.5C674.7,188.2 679.2,191.5 685.2,195.0C691.2,198.5 701.2,203.7 704.4,205.4C706.0,206.4 711.0,209.3 714.2,211.6C717.4,213.8 721.4,217.2 723.6,218.9C725.9,220.6 727.0,221.5 727.7,222.0C728.9,223.7 732.9,229.0 735.0,232.3C737.1,235.6 738.8,238.8 740.2,241.7C741.6,244.6 742.6,247.5 743.3,250.0C744.0,252.5 744.1,254.3 744.2,256.5C744.4,258.7 744.5,260.6 744.2,263.3C743.9,266.0 743.5,269.5 742.6,272.6C741.7,275.7 740.5,278.9 739.0,282.0C737.5,285.1 735.8,288.2 733.3,291.3C730.8,294.4 727.5,297.5 723.9,300.6C720.3,303.7 715.5,307.4 711.5,310.0C707.5,312.6 703.0,314.7 700.0,316.3C697.0,317.9 696.2,318.3 693.4,319.4C690.6,320.5 686.5,321.8 683.0,323.0C679.5,324.2 676.1,325.5 672.6,326.6C669.1,327.7 665.7,328.9 662.2,329.8C658.8,330.7 655.4,331.4 651.9,332.1C648.4,332.8 645.0,333.4 641.5,333.9C638.0,334.4 634.6,334.8 631.1,335.2C627.6,335.6 624.2,335.8 620.7,336.0C617.2,336.2 613.9,336.3 610.4,336.3C606.9,336.3 603.4,336.2 600.0,336.0C596.6,335.8 592.8,335.5 590.0,335.2C587.2,334.9 585.9,334.8 583.0,334.4C580.1,334.0 576.1,333.4 572.6,332.8C569.1,332.2 565.7,331.5 562.2,330.8C558.8,330.1 555.4,329.6 551.9,328.6C548.4,327.7 545.0,326.6 541.5,325.1C538.0,323.7 534.2,321.6 531.1,319.9C528.0,318.2 524.2,315.8 522.8,315.0C521.7,314.2 518.8,312.0 516.3,310.4C513.8,308.8 511.1,307.0 508.0,305.3C504.9,303.6 501.1,301.9 497.6,300.1C494.1,298.3 490.6,296.3 487.2,294.4C483.8,292.5 480.3,290.6 476.9,288.7C473.4,286.8 470.0,284.9 466.5,283.0C463.0,281.1 459.6,279.2 456.1,277.3C452.6,275.4 449.1,273.7 445.7,271.6C442.2,269.5 439.0,267.8 435.4,264.9C431.8,262.0 427.1,257.5 424.0,254.4C420.9,251.3 418.8,249.0 416.8,246.1C414.8,243.2 413.1,239.7 412.1,236.8C411.1,233.9 410.7,231.1 410.6,228.5C410.5,225.9 410.9,223.4 411.6,221.2C412.3,218.9 413.7,216.5 414.7,215.0C415.7,213.5 416.4,213.0 417.5,212.0C418.6,211.0 420.9,209.4 421.6,208.9Z" fill="#dca510" stroke="#3a2a00" stroke-width="0.4"/>
<path d="M672.9,324.2C671.1,324.6 665.3,326.0 662.4,326.6C659.6,327.2 659.1,327.3 655.7,327.8C652.2,328.3 645.7,329.0 641.6,329.4C637.5,329.8 634.7,330.1 631.2,330.4C627.7,330.7 624.2,330.9 620.7,331.0C617.3,331.1 613.9,331.2 610.4,331.2C606.9,331.2 602.8,330.9 599.9,330.8C597.1,330.6 596.1,330.5 593.3,330.3C590.5,330.1 586.4,329.7 582.9,329.4C579.4,329.0 575.9,328.7 572.4,328.2C568.9,327.7 565.4,327.0 561.9,326.3C558.5,325.5 553.3,324.1 551.6,323.7" fill="none" stroke="url(#gLipHl)" stroke-width="2.2"/>
<path d="M704.4,205.4C705.8,206.4 710.1,209.2 713.0,211.5C715.9,213.8 718.7,216.1 721.5,218.9C724.3,221.7 727.4,225.1 729.8,228.2C732.2,231.3 734.2,233.9 736.0,237.5C737.8,241.1 739.8,246.8 740.7,250.0C741.6,253.2 741.1,254.8 741.2,257.0C741.3,259.2 741.4,260.7 741.1,263.3C740.8,265.9 740.2,269.5 739.3,272.6C738.3,275.7 737.1,278.9 735.4,282.0C733.7,285.1 731.7,288.2 729.1,291.3C726.5,294.4 723.4,297.5 719.8,300.6C716.2,303.7 710.6,307.8 707.3,310.0C704.0,312.2 702.3,312.5 700.0,313.6C697.7,314.7 696.2,315.3 693.4,316.4C690.6,317.5 686.5,318.9 683.0,320.0C679.5,321.1 676.1,322.1 672.6,323.0C669.1,323.9 665.1,324.8 662.2,325.4C659.4,326.0 656.6,326.4 655.5,326.6Z" fill="url(#gOr)"/>
<path d="M704.4,205.4C705.8,206.4 710.1,209.2 713.0,211.5C715.9,213.8 718.7,216.1 721.5,218.9C724.3,221.7 727.4,225.1 729.8,228.2C732.2,231.3 734.2,233.9 736.0,237.5C737.8,241.1 739.8,246.8 740.7,250.0C741.6,253.2 741.1,254.8 741.2,257.0C741.3,259.2 741.4,260.7 741.1,263.3C740.8,265.9 740.2,269.5 739.3,272.6C738.3,275.7 737.1,278.9 735.4,282.0C733.7,285.1 731.7,288.2 729.1,291.3C726.5,294.4 723.4,297.5 719.8,300.6C716.2,303.7 710.6,307.8 707.3,310.0C704.0,312.2 702.3,312.5 700.0,313.6C697.7,314.7 696.2,315.3 693.4,316.4C690.6,317.5 686.5,318.9 683.0,320.0C679.5,321.1 676.1,322.1 672.6,323.0C669.1,323.9 665.1,324.8 662.2,325.4C659.4,326.0 656.6,326.4 655.5,326.6Z" fill="url(#gOrSh)"/>
<path d="M700.2,214.2C702.0,215.1 707.6,217.6 711.1,219.9C714.6,222.2 718.5,225.3 721.5,228.2C724.5,231.1 726.7,233.9 728.8,237.5C730.9,241.1 732.9,247.1 733.9,250.0C734.9,252.9 734.5,252.4 734.8,255.0C735.0,257.6 735.8,261.4 735.4,265.4C735.0,269.4 733.8,274.8 732.2,278.9C730.6,283.0 728.8,286.7 726.0,290.3C723.2,293.9 719.4,297.3 715.6,300.6C711.8,303.9 707.5,307.4 703.2,310.0C698.9,312.6 692.2,315.4 690.0,316.5L693.4,316.4C694.5,315.9 697.7,314.7 700.0,313.6C702.3,312.5 704.0,312.2 707.3,310.0C710.6,307.8 716.2,303.7 719.8,300.6C723.4,297.5 726.5,294.4 729.1,291.3C731.7,288.2 733.7,285.1 735.4,282.0C737.1,278.9 738.3,275.7 739.3,272.6C740.2,269.5 740.8,265.9 741.1,263.3C741.4,260.7 741.3,259.2 741.2,257.0C741.1,254.8 741.6,253.2 740.7,250.0C739.8,246.8 737.8,241.1 736.0,237.5C734.2,233.9 732.2,231.3 729.8,228.2C727.4,225.1 724.3,221.7 721.5,218.9C718.7,216.1 715.9,213.8 713.0,211.5C710.1,209.2 705.8,206.4 704.4,205.4Z" fill="#c9950c"/>
<path d="M421.6,208.9 L528.8,146.8 Q536,143.6 542.2,141.6C543.9,141.6 549.1,141.4 552.6,141.3C556.1,141.2 559.3,141.2 563.0,141.3C566.7,141.4 571.3,141.5 575.0,141.9C578.7,142.3 581.9,142.8 585.4,143.5C588.9,144.2 592.2,145.0 595.7,146.1C599.2,147.2 602.6,148.6 606.1,150.2C609.6,151.8 613.0,153.6 616.5,155.4C620.0,157.2 621.7,158.2 626.9,161.1C632.1,163.9 640.7,168.6 647.6,172.5C654.5,176.4 662.1,180.8 668.4,184.5C674.7,188.2 679.2,191.5 685.2,195.0C691.2,198.5 701.2,203.7 704.4,205.4L655.5,326.6C653.2,326.9 645.6,327.8 641.5,328.2C637.4,328.6 634.6,328.9 631.1,329.2C627.6,329.5 624.2,329.7 620.7,329.8C617.2,329.9 613.9,330.0 610.4,330.0C606.9,330.0 602.8,329.8 600.0,329.6C597.2,329.5 596.2,329.3 593.4,329.1C590.6,328.9 586.5,328.6 583.0,328.2C579.5,327.8 576.1,327.5 572.6,327.0C569.1,326.5 565.7,325.9 562.2,325.1C558.8,324.4 555.4,323.5 551.9,322.5C548.4,321.5 545.0,320.4 541.5,318.9C538.0,317.4 534.2,315.3 531.1,313.7C528.0,312.1 524.2,310.2 522.8,309.5L522.8,315C521.7,314.2 518.8,312.0 516.3,310.4C513.8,308.8 511.1,307.0 508.0,305.3C504.9,303.6 501.1,301.9 497.6,300.1C494.1,298.3 490.6,296.3 487.2,294.4C483.8,292.5 480.3,290.6 476.9,288.7C473.4,286.8 470.0,284.9 466.5,283.0C463.0,281.1 459.6,279.2 456.1,277.3C452.6,275.4 449.1,273.7 445.7,271.6C442.2,269.5 439.0,267.8 435.4,264.9C431.8,262.0 427.1,257.5 424.0,254.4C420.9,251.3 418.8,249.0 416.8,246.1C414.8,243.2 413.1,239.7 412.1,236.8C411.1,233.9 410.7,231.1 410.6,228.5C410.5,225.9 410.9,223.4 411.6,221.2C412.3,218.9 413.7,216.5 414.7,215.0C415.7,213.5 416.4,213.0 417.5,212.0C418.6,211.0 420.9,209.4 421.6,208.9Z" fill="#04cccb"/>
<path d="M531.9,156.1 L528.8,146.8 Q536,143.6 542.2,141.6C543.9,141.6 549.1,141.4 552.6,141.3C556.1,141.2 559.3,141.2 563.0,141.3C566.7,141.4 571.3,141.5 575.0,141.9C578.7,142.3 581.9,142.8 585.4,143.5C588.9,144.2 592.2,145.0 595.7,146.1C599.2,147.2 602.6,148.6 606.1,150.2C609.6,151.8 613.0,153.6 616.5,155.4C620.0,157.2 621.7,158.2 626.9,161.1C632.1,163.9 640.7,168.6 647.6,172.5C654.5,176.4 662.1,180.8 668.4,184.5C674.7,188.2 679.2,191.5 685.2,195.0C691.2,198.5 701.2,203.7 704.4,205.4L655.5,326.6C653.2,326.9 645.6,327.8 641.5,328.2C637.4,328.6 634.6,328.9 631.1,329.2C627.6,329.5 624.2,329.7 620.7,329.8C617.2,329.9 613.9,330.0 610.4,330.0C606.9,330.0 601.7,329.7 600.0,329.6L587.1,328 L576.2,295 L539.6,180 Z" fill="url(#gCy)"/>
<path d="M421.6,208.9 L428.9,216.2C427.9,217.2 424.4,219.9 423.0,222.3C421.6,224.7 420.6,227.8 420.4,230.6C420.1,233.4 420.6,236.1 421.5,238.9C422.4,241.7 424.0,244.6 426.1,247.2C428.2,249.8 431.3,252.2 434.4,254.4C437.5,256.6 441.0,258.5 444.8,260.6C448.6,262.7 452.0,264.1 457.2,266.9C462.4,269.7 469.7,273.9 476.0,277.5C482.3,281.1 489.3,285.1 495.0,288.5C500.7,291.9 505.5,295.0 510.0,298.0C514.5,301.0 520.0,305.1 522.0,306.5L522.8,315C521.7,314.2 518.8,312.0 516.3,310.4C513.8,308.8 511.1,307.0 508.0,305.3C504.9,303.6 501.1,301.9 497.6,300.1C494.1,298.3 490.6,296.3 487.2,294.4C483.8,292.5 480.3,290.6 476.9,288.7C473.4,286.8 470.0,284.9 466.5,283.0C463.0,281.1 459.6,279.2 456.1,277.3C452.6,275.4 449.1,273.7 445.7,271.6C442.2,269.5 439.0,267.8 435.4,264.9C431.8,262.0 427.1,257.5 424.0,254.4C420.9,251.3 418.8,249.0 416.8,246.1C414.8,243.2 413.1,239.7 412.1,236.8C411.1,233.9 410.7,231.1 410.6,228.5C410.5,225.9 410.9,223.4 411.6,221.2C412.3,218.9 413.7,216.5 414.7,215.0C415.7,213.5 416.4,213.0 417.5,212.0C418.6,211.0 420.9,209.4 421.6,208.9Z" fill="url(#gWall)"/>
<path d="M428.9,216.2C427.9,217.2 424.4,219.9 423.0,222.3C421.6,224.7 420.6,227.8 420.4,230.6C420.1,233.4 420.6,236.1 421.5,238.9C422.4,241.7 424.0,244.6 426.1,247.2C428.2,249.8 431.3,252.2 434.4,254.4C437.5,256.6 441.0,258.5 444.8,260.6C448.6,262.7 452.0,264.1 457.2,266.9C462.4,269.7 469.7,273.9 476.0,277.5C482.3,281.1 489.3,285.1 495.0,288.5C500.7,291.9 505.5,295.0 510.0,298.0C514.5,301.0 520.0,305.1 522.0,306.5L518.4,304.8 L503.8,296.5 L464.4,255 Z" fill="url(#gFil)"/>
<path d="M421.6,208.9 L428.9,216.2C427.9,217.2 424.4,219.9 423.0,222.3C421.6,224.7 420.6,227.8 420.4,230.6C420.1,233.4 420.6,236.1 421.5,238.9C422.4,241.7 424.0,244.6 426.1,247.2C428.2,249.8 431.3,252.2 434.4,254.4C437.5,256.6 441.0,258.5 444.8,260.6C448.6,262.7 452.0,264.1 457.2,266.9C462.4,269.7 469.7,273.9 476.0,277.5C482.3,281.1 489.3,285.1 495.0,288.5C500.7,291.9 505.5,295.0 510.0,298.0C514.5,301.0 520.0,305.1 522.0,306.5M419.5,211.6C418.9,212.5 416.7,214.7 415.7,217.0C414.7,219.3 413.9,222.6 413.7,225.4C413.4,228.2 413.5,230.8 414.2,233.7C414.9,236.6 416.2,240.2 417.8,243.0C419.4,245.8 421.4,247.9 424.0,250.3C426.6,252.7 429.6,254.9 433.4,257.5C437.2,260.1 440.8,262.2 446.9,265.8C453.0,269.4 462.0,274.5 470.0,279.0C478.0,283.5 488.0,288.9 495.0,293.0C502.0,297.1 507.3,300.5 512.0,303.5C516.7,306.5 521.2,309.8 523.0,311.0M417.0,228.0C417.3,229.7 417.5,234.7 418.6,238.0C419.7,241.3 421.4,244.8 423.5,247.6C425.6,250.4 427.4,252.0 431.0,254.6C434.6,257.2 438.5,259.6 445.0,263.4C451.5,267.2 461.5,272.8 470.0,277.6C478.5,282.4 488.8,288.1 496.0,292.2C503.2,296.3 510.2,300.7 513.0,302.4M428.9,216.2 L531.9,156.1 L528.8,146.8M428.9,216.2 L464.4,255 L503.8,296.5 L518.4,304.8M531.9,156.1 L539.6,180 L576.2,295 L587.1,328M531.9,156.1C533.6,155.7 538.8,154.1 542.2,153.5C545.7,152.9 549.1,152.7 552.6,152.5C556.1,152.3 559.3,152.2 563.0,152.2C566.7,152.2 571.3,152.0 575.0,152.3C578.7,152.6 581.2,153.0 585.4,153.9C589.5,154.8 597.5,157.2 599.9,157.8M609.2,161.6 L626.9,171.5 L649.7,184.5 L680,202.3 L700.2,214.2M704.4,205.4 L685.7,250 L670,287.2 L655.5,326.6M655.5,326.6C653.2,326.9 645.6,327.8 641.5,328.2C637.4,328.6 634.6,328.9 631.1,329.2C627.6,329.5 624.2,329.7 620.7,329.8C617.2,329.9 613.9,330.0 610.4,330.0C606.9,330.0 602.8,329.8 600.0,329.6C597.2,329.5 596.2,329.3 593.4,329.1C590.6,328.9 586.5,328.6 583.0,328.2C579.5,327.8 576.1,327.5 572.6,327.0C569.1,326.5 565.7,325.9 562.2,325.1C558.8,324.4 555.4,323.5 551.9,322.5C548.4,321.5 545.0,320.4 541.5,318.9C538.0,317.4 534.2,315.3 531.1,313.7C528.0,312.1 524.2,310.2 522.8,309.5" fill="none" stroke="#053c3c" stroke-width="0.55"/>
<path d="M704.4,205.4C705.8,206.4 710.1,209.2 713.0,211.5C715.9,213.8 718.7,216.1 721.5,218.9C724.3,221.7 727.4,225.1 729.8,228.2C732.2,231.3 734.2,233.9 736.0,237.5C737.8,241.1 739.8,246.8 740.7,250.0C741.6,253.2 741.1,254.8 741.2,257.0C741.3,259.2 741.4,260.7 741.1,263.3C740.8,265.9 740.2,269.5 739.3,272.6C738.3,275.7 737.1,278.9 735.4,282.0C733.7,285.1 731.7,288.2 729.1,291.3C726.5,294.4 723.4,297.5 719.8,300.6C716.2,303.7 710.6,307.8 707.3,310.0C704.0,312.2 702.3,312.5 700.0,313.6C697.7,314.7 696.2,315.3 693.4,316.4C690.6,317.5 686.5,318.9 683.0,320.0C679.5,321.1 676.1,322.1 672.6,323.0C669.1,323.9 665.1,324.8 662.2,325.4C659.4,326.0 656.6,326.4 655.5,326.6M700.2,214.2C702.0,215.1 707.6,217.6 711.1,219.9C714.6,222.2 718.5,225.3 721.5,228.2C724.5,231.1 726.7,233.9 728.8,237.5C730.9,241.1 732.9,247.1 733.9,250.0C734.9,252.9 734.5,252.4 734.8,255.0C735.0,257.6 735.8,261.4 735.4,265.4C735.0,269.4 733.8,274.8 732.2,278.9C730.6,283.0 728.8,286.7 726.0,290.3C723.2,293.9 719.4,297.3 715.6,300.6C711.8,303.9 707.5,307.4 703.2,310.0C698.9,312.6 692.2,315.4 690.0,316.5" fill="none" stroke="#3a2800" stroke-width="0.55"/>
<path d="M536,143.6 Q539,142.4 542.2,141.6C543.9,141.6 549.1,141.4 552.6,141.3C556.1,141.2 559.3,141.2 563.0,141.3C566.7,141.4 571.3,141.5 575.0,141.9C578.7,142.3 581.9,142.8 585.4,143.5C588.9,144.2 592.2,145.0 595.7,146.1C599.2,147.2 602.6,148.6 606.1,150.2C609.6,151.8 613.0,153.6 616.5,155.4C620.0,157.2 621.7,158.2 626.9,161.1C632.1,163.9 640.7,168.6 647.6,172.5C654.5,176.4 662.1,180.8 668.4,184.5C674.7,188.2 679.2,191.5 685.2,195.0C691.2,198.5 701.2,203.7 704.4,205.4C706.0,206.4 711.0,209.3 714.2,211.6C717.4,213.8 721.4,217.2 723.6,218.9C725.9,220.6 727.0,221.5 727.7,222.0" fill="none" stroke="#202a2a" stroke-width="0.8"/>
<path d="M536.8,330.8 L592.5,406.3 M700,329.8 L641.2,401.6 M587.3,402.6 L592,435 L598.2,475.5 Q601,480 606.5,482.2 Q610,483.6 613.8,483.8 Q618,483.6 622,482.2 Q626,480.8 629.3,476.5 L636,435 L641.2,401.6" fill="none" stroke="#3a2a06" stroke-width="0.5"/>
<g>
<path d="M599.6,239.2 L628.4,239.2 L628.4,287.6 L599.6,287.6 Z" fill="#1a7a78" fill-opacity="0.1"/>
<path d="M599.6,239.2 L641.9,263.1 L599.6,287.6 Z M628.4,239.2 L586.1,263.1 L628.4,287.6 Z" fill="#1a7a78" fill-opacity="0.06" stroke="#8a7c4c" stroke-width="0.6"/>
<path d="M613.7,264 L613.7,249" stroke="#0a14e6" stroke-width="3" fill="none"/><path d="M613.7,243.6 L617,251 L610.4,251 Z" fill="#0a14e6"/>
<path d="M613.7,263.7 L626,256.7" stroke="#18c818" stroke-width="2.6" fill="none"/><path d="M631.4,253.6 L627.3,259.6 L624,254.4 Z" fill="#18c818"/>
<path d="M613.7,263.7 L625.5,270.3" stroke="#e61414" stroke-width="2.8" fill="none"/><path d="M631,273.3 L623.6,273 L626.6,267.2 Z" fill="#ff6a6a"/>
</g>
<g>
<path d="M206.6,484 L206.6,469" stroke="#0a14e6" stroke-width="3" fill="none"/><polygon points="206.6,464.4 209.8,471 203.4,471" fill="#0a14e6"/>
<path d="M206.8,483.8 L218,477.4" stroke="#18d018" stroke-width="2.6" fill="none"/><polygon points="224,474 219.6,480.2 216.4,475" fill="#18d018"/>
<path d="M206.8,484 L218,490.4" stroke="#e61414" stroke-width="2.8" fill="none"/><polygon points="224.4,494 216.6,493.2 219.6,487.4" fill="#ff4a4a"/>
<text x="204.4" y="463.6" font-size="8.4" fill="#1a3cf0" font-family="Liberation Sans, sans-serif">Z</text>
<text x="224.8" y="474.8" font-size="8.4" fill="#2ed82e" font-family="Liberation Sans, sans-serif">Y</text>
<text x="224.8" y="499.2" font-size="8.4" fill="#e62020" font-family="Liberation Sans, sans-serif">X</text>
</g>
<path d="M440.4,102 L443.6,102 L443.6,109.4 L440.4,109.4" fill="none" stroke="#2a6cc0" stroke-width="0.8"/><path d="M437,105.7 L442,105.7" stroke="#e02020" stroke-width="1.1"/><polygon points="436,105.7 438.8,103.6 438.8,107.8" fill="#e02020"/><path d="M450.6,101.4 L450.6,106.6" stroke="#2a6cc0" stroke-width="1"/><polygon points="449,106 454,104.6 457.4,107 452,109.6" fill="#5ad05a"/><path d="M450.6,106.6 L456,108.6" stroke="#e03030" stroke-width="0.9"/><circle cx="450.6" cy="102.4" r="1.2" fill="#8ab0d0"/><polygon points="459.2,104.7 461.4,104.7 460.3,106.2" fill="#333"/><path d="M469.6,108.8 L474.2,102.4" stroke="#e04a3a" stroke-width="1.7"/><path d="M473.4,103.4 L474.6,101.8" stroke="#f0c8a0" stroke-width="1.7"/><polygon points="480,105 484.4,103 488.4,105 484,107.2" fill="#f8d030"/><polygon points="480,105 484,107.2 484,110 480,107.8" fill="#1f9ccc"/><polygon points="484,107.2 488.4,105 488.4,107.8 484,110" fill="#0f6f9f"/><polygon points="483,103.6 484.6,101.4 486.2,103.6" fill="#2a8cd8"/><polygon points="492.4,103.6 497.4,101.6 501,103 496,105.2" fill="#5cc6ea"/><polygon points="492.4,103.6 496,105.2 496,110 492.6,108.2" fill="#1f9ccc"/><polygon points="496,105.2 501,103 500.8,107.6 496,110" fill="#0f5f8f"/><polygon points="503.5,104.7 505.7,104.7 504.6,106.2" fill="#333"/><polygon points="511.4,103.6 516.4,101.6 520,103 515,105.2" fill="#fdfdfd" stroke="#9aa" stroke-width="0.4"/><polygon points="511.4,103.6 515,105.2 515,110 511.6,108.2" fill="#f4f6f8" stroke="#9aa" stroke-width="0.4"/><polygon points="515,105.2 520,103 519.8,107.6 515,110" fill="#e8ecef" stroke="#9aa" stroke-width="0.4"/><polygon points="522.3,104.7 524.5,104.7 523.4,106.2" fill="#333"/><polygon points="531,103.6 534.6,101.6 538.4,103.6 538.4,107.8 534.6,109.8 531,107.8" fill="#f0a020"/><path d="M531,103.6 L534.6,105.6 L538.4,103.6 M534.6,105.6 L534.6,109.8" stroke="#c87810" stroke-width="0.5" fill="none"/><circle cx="534.6" cy="105.6" r="1" fill="#fde27a"/><polygon points="540.9,104.7 543.1,104.7 542.0,106.2" fill="#333"/><rect x="549" y="101.6" width="8.4" height="8.2" fill="#2a7cd0"/><circle cx="553.2" cy="105.6" r="2.8" fill="#f6c878" stroke="#e09a30" stroke-width="0.6"/><polygon points="559.7,104.7 561.9,104.7 560.8,106.2" fill="#333"/><rect x="567.6" y="101.8" width="7.6" height="7.6" fill="#fbfcfd" stroke="#b8c4d0" stroke-width="0.4"/><rect x="568" y="106.6" width="2.6" height="2.6" fill="#2a7cd0"/><rect x="572.6" y="102.2" width="2.2" height="2.2" fill="#6aa8e0"/><path d="M582.4,101.6 L582.4,108 M587.8,101.6 L587.8,108 M582.4,104.8 L587.8,104.8" stroke="#2a7cd0" stroke-width="0.9" fill="none"/><rect x="581.6" y="108.4" width="7" height="1.1" fill="#e03030"/><polygon points="591.5,104.7 593.7,104.7 592.6,106.2" fill="#333"/><rect x="599.4" y="101.8" width="8.2" height="6.6" fill="#8a9098" stroke="#5a6068" stroke-width="0.5"/><rect x="600.6" y="103" width="5.8" height="3.4" fill="#b8c4d0"/><rect x="601.4" y="108.6" width="4.2" height="1.2" fill="#6a7078"/><polygon points="610.1,104.7 612.3,104.7 611.2,106.2" fill="#333"/><rect x="618.2" y="104" width="8" height="2.8" fill="#111"/><rect x="630.4" y="101.6" width="8" height="8.2" fill="#dfeaf4" stroke="#6a7a8a" stroke-width="0.7"/><path d="M633,101.6 L633,109.8 M635.8,101.6 L635.8,109.8" stroke="#4a8cd0" stroke-width="0.5"/><polygon points="643.6,104.4 647.6,102.4 651.6,104.4 647.6,106.4" fill="#5cc6ea"/><polygon points="643.6,106 647.6,108 651.6,106 651.6,107.2 647.6,109.4 643.6,107.2" fill="#1f8ccc"/><polygon points="643.6,104.4 647.6,106.4 651.6,104.4 651.6,105.4 647.6,107.6 643.6,105.4" fill="#2a9cd8"/><polygon points="653.9,104.7 656.1,104.7 655.0,106.2" fill="#333"/><rect x="660.6" y="100.3" width="55.6" height="10.3" fill="#ffffff" stroke="#b8bcc0" stroke-width="0.5"/><path d="M665,105.6 Q663.6,103.2 665,102.2 Q666.4,101.4 667.6,102.2 Q669,103.2 667.6,105.6Z" fill="#fff8d8" stroke="#555" stroke-width="0.5"/><rect x="665.2" y="106" width="2.2" height="1.8" fill="#666"/><circle cx="675.3" cy="105.4" r="3.2" fill="#f4e040" stroke="#6a8a4a" stroke-width="0.6"/><polygon points="712.7,103.9 714.9,103.9 713.8,105.4" fill="#333"/>
</svg>
<span class="t " style="left:680.50px;top:103.28px;font-size:6.164px;color:#222;letter-spacing:-0.338px;transform:scaleY(1.087);">Layer000</span>
<span class="t " style="left:188.70px;top:103.04px;font-size:5.98px;color:#111;letter-spacing:0.091px;transform:scaleY(1.087);">Hold down &lt;F2&gt; for dynamic viewing.</span>
<span class="t " style="left:188.70px;top:110.94px;font-size:5.98px;color:#111;letter-spacing:0.091px;transform:scaleY(1.087);">&lt;F8&gt; or &lt;Shift-roll&gt; to find next valid filter setting.</span>
<span class="t " style="left:180.40px;top:504.10px;font-size:7.912px;color:#111;letter-spacing:-0.018px;transform:scaleY(1.087);">212.617 mm</span>
<div class="b " style="left:178.6px;top:87.2px;width:94.3px;height:11.6px;background:#ffffff;border:0.5px solid #cfd3d7;border-bottom:none;"></div>
<span class="t " style="left:194.40px;top:90.38px;font-size:6.164px;color:#222;letter-spacing:-0.095px;transform:scaleY(1.087);">Funnel 4.Z3 - [Funnel 3]</span>
<svg width="120" height="14" viewBox="180 86 120 14" style="left:180px;top:86px"><path d="M186.2,92.6 L190.4,92.6 M188.3,90.5 L188.3,94.7" stroke="#6a4a1a" stroke-width="0.9"/><path d="M261.6,90.4 L266.2,95 M266.2,90.4 L261.6,95" stroke="#8a5a2a" stroke-width="0.9"/><path d="M277.6,92.7 L282.2,92.7 M279.9,90.4 L279.9,95" stroke="#a0a4a8" stroke-width="0.6"/></svg>
</body></html>
